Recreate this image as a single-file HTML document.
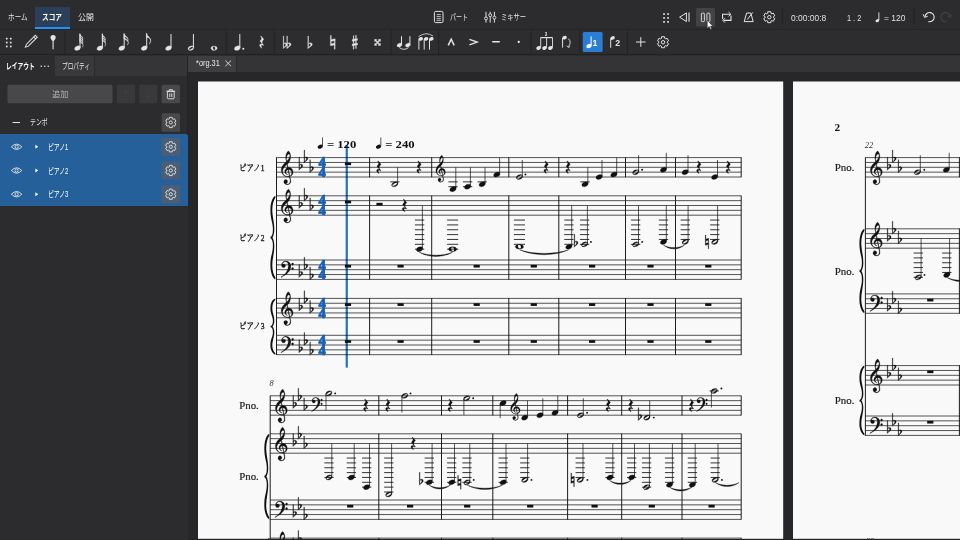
<!DOCTYPE html>
<html lang="ja"><head><meta charset="utf-8"><title>org.31</title>
<style>
html,body{margin:0;padding:0;background:#2d2d30;}
body{width:960px;height:540px;overflow:hidden;position:relative;font-family:"Liberation Sans","Noto Sans CJK JP",sans-serif;color:#e6e6e6;font-size:8px;}
.a{position:absolute;white-space:nowrap;line-height:1;}
.t{position:absolute;white-space:nowrap;line-height:10px;height:10px;transform-origin:0 50%;}
#score{position:absolute;left:0;top:0;}
#score .g{stroke:#111;stroke-width:14px;}
#score text{font-family:"Liberation Serif","Noto Serif CJK JP","Noto Serif CJK SC",serif;}
#ui{position:absolute;left:0;top:0;pointer-events:none;}
#ui text{font-family:"Liberation Sans",sans-serif;}
</style></head><body>
<div class="a" style="left:0;top:0;width:960px;height:29px;background:#2c2c2f"></div>
<div class="a" style="left:0;top:29px;width:960px;height:1px;background:#252527"></div>
<div class="a" style="left:0;top:30px;width:960px;height:24.5px;background:#2d2d30"></div>
<div class="a" style="left:0;top:54.4px;width:960px;height:1.1px;background:#222224"></div>
<div class="a" style="left:35px;top:6.6px;width:35.2px;height:20px;background:#2b4058"></div>
<div class="a" style="left:35px;top:26.5px;width:35.2px;height:2px;background:#2391f5"></div>
<!-- left panel -->
<div class="a" style="left:0;top:55.5px;width:187.6px;height:485px;background:#2c2c2f"></div>
<div class="a" style="left:55.2px;top:55.5px;width:131.8px;height:20.6px;background:#353538"></div>
<div class="a" style="left:55.2px;top:55.5px;width:40.2px;height:20.6px;background:#39393c;border-right:1px solid #2a2a2c;box-sizing:border-box"></div>
<div class="a" style="left:0;top:134.4px;width:187.8px;height:71.5px;background:#25609a"></div>
<div class="a" style="left:187.2px;top:55.5px;width:.9px;height:79px;background:#222224"></div>
<!-- canvas -->
<div class="a" style="left:188px;top:55.5px;width:772px;height:16px;background:#343437"></div>
<div class="a" style="left:188px;top:55.5px;width:49.4px;height:16px;background:#3e3e41;border-right:1px solid #2a2a2c;box-sizing:border-box"></div>
<div class="a" style="left:188px;top:71.5px;width:772px;height:469px;background:#27272a"></div>
<svg id="score" width="960" height="540" viewBox="0 0 960 540" fill="#111">
<rect x="198" y="81.5" width="585.2" height="460" fill="#f9f9f9"/>
<rect x="793" y="81.5" width="170" height="460" fill="#f9f9f9"/>

<path d="M276.5 157.6H741.2M276.5 162.45H741.2M276.5 167.3H741.2M276.5 172.15H741.2M276.5 177H741.2" stroke="#2a2a2a" stroke-width=".8" fill="none"/>
<path d="M276.5 195.8H741.2M276.5 200.65H741.2M276.5 205.5H741.2M276.5 210.35H741.2M276.5 215.2H741.2" stroke="#2a2a2a" stroke-width=".8" fill="none"/>
<path d="M276.5 260H741.2M276.5 264.85H741.2M276.5 269.7H741.2M276.5 274.55H741.2M276.5 279.4H741.2" stroke="#2a2a2a" stroke-width=".8" fill="none"/>
<path d="M276.5 298.4H741.2M276.5 303.25H741.2M276.5 308.1H741.2M276.5 312.95H741.2M276.5 317.8H741.2" stroke="#2a2a2a" stroke-width=".8" fill="none"/>
<path d="M276.5 335.3H741.2M276.5 340.15H741.2M276.5 345H741.2M276.5 349.85H741.2M276.5 354.7H741.2" stroke="#2a2a2a" stroke-width=".8" fill="none"/>
<path d="M276.5 157.35V354.95" stroke="#111" stroke-width="0.95" fill="none"/>
<path d="M369.6 157.35V177.25" stroke="#111" stroke-width="0.95" fill="none"/>
<path d="M369.6 195.55V279.65" stroke="#111" stroke-width="0.95" fill="none"/>
<path d="M369.6 298.15V354.95" stroke="#111" stroke-width="0.95" fill="none"/>
<path d="M431.7 157.35V177.25" stroke="#111" stroke-width="0.95" fill="none"/>
<path d="M431.7 195.55V279.65" stroke="#111" stroke-width="0.95" fill="none"/>
<path d="M431.7 298.15V354.95" stroke="#111" stroke-width="0.95" fill="none"/>
<path d="M508.8 157.35V177.25" stroke="#111" stroke-width="0.95" fill="none"/>
<path d="M508.8 195.55V279.65" stroke="#111" stroke-width="0.95" fill="none"/>
<path d="M508.8 298.15V354.95" stroke="#111" stroke-width="0.95" fill="none"/>
<path d="M558.8 157.35V177.25" stroke="#111" stroke-width="0.95" fill="none"/>
<path d="M558.8 195.55V279.65" stroke="#111" stroke-width="0.95" fill="none"/>
<path d="M558.8 298.15V354.95" stroke="#111" stroke-width="0.95" fill="none"/>
<path d="M625.5 157.35V177.25" stroke="#111" stroke-width="0.95" fill="none"/>
<path d="M625.5 195.55V279.65" stroke="#111" stroke-width="0.95" fill="none"/>
<path d="M625.5 298.15V354.95" stroke="#111" stroke-width="0.95" fill="none"/>
<path d="M675.5 157.35V177.25" stroke="#111" stroke-width="0.95" fill="none"/>
<path d="M675.5 195.55V279.65" stroke="#111" stroke-width="0.95" fill="none"/>
<path d="M675.5 298.15V354.95" stroke="#111" stroke-width="0.95" fill="none"/>
<path d="M741.2 157.35V177.25" stroke="#111" stroke-width="0.95" fill="none"/>
<path d="M741.2 195.55V279.65" stroke="#111" stroke-width="0.95" fill="none"/>
<path d="M741.2 298.15V354.95" stroke="#111" stroke-width="0.95" fill="none"/>
<path transform="matrix(0.03106 0 0 -0.08360 268.85 279.4)" d="M53 509Q84 511 107 533Q130 555 130 595Q130 615 125 634Q120 653 108 671Q85 706 68 743Q50 780 50 835Q50 879 72 913Q93 947 129 970Q165 992 207 1000L211 976Q167 954 139 917Q111 880 111 833Q111 807 120 778Q128 750 144 718Q176 654 176 602Q176 577 168 558Q163 545 152 532Q141 518 131 509Q121 500 117 500Q138 490 157 462Q176 433 176 398Q176 345 144 283Q111 220 111 167Q111 120 139 84Q167 47 211 24L207 0Q165 8 129 30Q93 53 72 88Q50 122 50 165Q50 210 60 240Q71 271 90 298Q105 320 118 347Q130 374 130 405Q130 445 108 466Q85 487 53 491Z"/>
<path transform="matrix(0.03106 0 0 -0.05630 268.85 354.7)" d="M53 509Q84 511 107 533Q130 555 130 595Q130 615 125 634Q120 653 108 671Q85 706 68 743Q50 780 50 835Q50 879 72 913Q93 947 129 970Q165 992 207 1000L211 976Q167 954 139 917Q111 880 111 833Q111 807 120 778Q128 750 144 718Q176 654 176 602Q176 577 168 558Q163 545 152 532Q141 518 131 509Q121 500 117 500Q138 490 157 462Q176 433 176 398Q176 345 144 283Q111 220 111 167Q111 120 139 84Q167 47 211 24L207 0Q165 8 129 30Q93 53 72 88Q50 122 50 165Q50 210 60 240Q71 271 90 298Q105 320 118 347Q130 374 130 405Q130 445 108 466Q85 487 53 491Z"/>
<path transform="matrix(0.01940 0 0 -0.01940 280.23 177)" d="M314 801Q300 854 291 906Q282 958 282 1012Q282 1059 288 1100Q295 1142 307 1177Q320 1217 341 1252Q362 1288 386 1311Q409 1334 427 1334Q451 1334 493 1249Q514 1206 524 1156Q534 1106 534 1049Q534 978 515 908Q496 837 460 775Q423 713 372 666L407 498Q422 500 432 501Q442 502 447 502Q508 502 556 468Q604 433 632 377Q661 321 661 254Q661 177 622 116Q582 54 503 25Q508 8 532 -117Q538 -147 541 -164Q544 -182 545 -195Q546 -208 546 -225Q546 -275 522 -314Q497 -354 456 -376Q414 -398 363 -398Q311 -398 271 -378Q231 -359 208 -324Q185 -290 185 -245Q185 -197 212 -165Q238 -133 287 -133Q329 -133 356 -164Q382 -194 382 -236Q382 -272 357 -299Q332 -326 292 -326H282Q308 -365 364 -365Q433 -365 472 -320Q511 -275 511 -205Q511 -188 507 -160Q503 -131 493 -91Q483 -51 478 -25Q472 1 470 12Q436 2 390 2Q304 2 222 52Q142 102 96 184Q50 266 50 361Q50 451 91 530Q132 609 192 675Q253 741 314 801ZM341 826Q364 838 390 870Q416 903 440 945Q464 987 479 1030Q494 1072 494 1106Q494 1142 483 1163Q472 1184 445 1184Q421 1184 398 1162Q376 1140 358 1104Q341 1067 331 1022Q321 977 321 930Q321 898 328 872Q334 846 341 826ZM398 379Q371 373 347 354Q323 334 308 306Q294 279 294 248Q294 223 307 196Q320 170 339 154Q352 142 365 136Q380 129 380 123Q380 120 370 117Q332 126 302 151Q271 176 254 212Q236 247 236 287Q236 330 254 370Q271 410 302 442Q334 474 374 490L345 641Q229 547 174 456Q120 366 120 277Q120 212 154 156Q188 100 247 66Q306 31 380 31Q400 31 420 35Q441 39 464 45ZM495 55Q593 97 593 227Q593 270 571 306Q549 341 512 362Q475 383 429 383Z" class="g"/>
<path transform="matrix(0.01940 0 0 -0.01940 297.93 169.24)" d="M50 615H81V225Q118 262 165 262Q197 262 223 240Q249 219 249 178Q249 146 230 119Q211 92 179 65L110 6Q91 -10 76 -26Q61 -41 50 -55ZM81 12Q107 40 125 64Q143 87 153 105Q164 124 170 140Q175 156 175 170Q175 198 162 210Q149 223 134 223Q118 223 102 212Q87 200 81 180Z" class="g"/>
<path transform="matrix(0.01940 0 0 -0.01940 303.03 161.97)" d="M50 615H81V225Q118 262 165 262Q197 262 223 240Q249 219 249 178Q249 146 230 119Q211 92 179 65L110 6Q91 -10 76 -26Q61 -41 50 -55ZM81 12Q107 40 125 64Q143 87 153 105Q164 124 170 140Q175 156 175 170Q175 198 162 210Q149 223 134 223Q118 223 102 212Q87 200 81 180Z" class="g"/>
<path transform="matrix(0.01940 0 0 -0.01940 308.83 171.66)" d="M50 615H81V225Q118 262 165 262Q197 262 223 240Q249 219 249 178Q249 146 230 119Q211 92 179 65L110 6Q91 -10 76 -26Q61 -41 50 -55ZM81 12Q107 40 125 64Q143 87 153 105Q164 124 170 140Q175 156 175 170Q175 198 162 210Q149 223 134 223Q118 223 102 212Q87 200 81 180Z" class="g"/>
<text x="318.5" y="167.2" font-size="14.6" font-weight="700" fill="#155fbb" stroke="#155fbb" stroke-width=".7" textLength="7.4" lengthAdjust="spacingAndGlyphs">4</text>
<text x="318.5" y="176.9" font-size="14.6" font-weight="700" fill="#155fbb" stroke="#155fbb" stroke-width=".7" textLength="7.4" lengthAdjust="spacingAndGlyphs">4</text>
<rect x="344.9" y="162.45" width="6.2" height="2.7"/>
<path transform="matrix(0.01940 0 0 -0.01940 280.23 215.2)" d="M314 801Q300 854 291 906Q282 958 282 1012Q282 1059 288 1100Q295 1142 307 1177Q320 1217 341 1252Q362 1288 386 1311Q409 1334 427 1334Q451 1334 493 1249Q514 1206 524 1156Q534 1106 534 1049Q534 978 515 908Q496 837 460 775Q423 713 372 666L407 498Q422 500 432 501Q442 502 447 502Q508 502 556 468Q604 433 632 377Q661 321 661 254Q661 177 622 116Q582 54 503 25Q508 8 532 -117Q538 -147 541 -164Q544 -182 545 -195Q546 -208 546 -225Q546 -275 522 -314Q497 -354 456 -376Q414 -398 363 -398Q311 -398 271 -378Q231 -359 208 -324Q185 -290 185 -245Q185 -197 212 -165Q238 -133 287 -133Q329 -133 356 -164Q382 -194 382 -236Q382 -272 357 -299Q332 -326 292 -326H282Q308 -365 364 -365Q433 -365 472 -320Q511 -275 511 -205Q511 -188 507 -160Q503 -131 493 -91Q483 -51 478 -25Q472 1 470 12Q436 2 390 2Q304 2 222 52Q142 102 96 184Q50 266 50 361Q50 451 91 530Q132 609 192 675Q253 741 314 801ZM341 826Q364 838 390 870Q416 903 440 945Q464 987 479 1030Q494 1072 494 1106Q494 1142 483 1163Q472 1184 445 1184Q421 1184 398 1162Q376 1140 358 1104Q341 1067 331 1022Q321 977 321 930Q321 898 328 872Q334 846 341 826ZM398 379Q371 373 347 354Q323 334 308 306Q294 279 294 248Q294 223 307 196Q320 170 339 154Q352 142 365 136Q380 129 380 123Q380 120 370 117Q332 126 302 151Q271 176 254 212Q236 247 236 287Q236 330 254 370Q271 410 302 442Q334 474 374 490L345 641Q229 547 174 456Q120 366 120 277Q120 212 154 156Q188 100 247 66Q306 31 380 31Q400 31 420 35Q441 39 464 45ZM495 55Q593 97 593 227Q593 270 571 306Q549 341 512 362Q475 383 429 383Z" class="g"/>
<path transform="matrix(0.01940 0 0 -0.01940 297.93 207.44)" d="M50 615H81V225Q118 262 165 262Q197 262 223 240Q249 219 249 178Q249 146 230 119Q211 92 179 65L110 6Q91 -10 76 -26Q61 -41 50 -55ZM81 12Q107 40 125 64Q143 87 153 105Q164 124 170 140Q175 156 175 170Q175 198 162 210Q149 223 134 223Q118 223 102 212Q87 200 81 180Z" class="g"/>
<path transform="matrix(0.01940 0 0 -0.01940 303.03 200.17)" d="M50 615H81V225Q118 262 165 262Q197 262 223 240Q249 219 249 178Q249 146 230 119Q211 92 179 65L110 6Q91 -10 76 -26Q61 -41 50 -55ZM81 12Q107 40 125 64Q143 87 153 105Q164 124 170 140Q175 156 175 170Q175 198 162 210Q149 223 134 223Q118 223 102 212Q87 200 81 180Z" class="g"/>
<path transform="matrix(0.01940 0 0 -0.01940 308.83 209.87)" d="M50 615H81V225Q118 262 165 262Q197 262 223 240Q249 219 249 178Q249 146 230 119Q211 92 179 65L110 6Q91 -10 76 -26Q61 -41 50 -55ZM81 12Q107 40 125 64Q143 87 153 105Q164 124 170 140Q175 156 175 170Q175 198 162 210Q149 223 134 223Q118 223 102 212Q87 200 81 180Z" class="g"/>
<text x="318.5" y="205.4" font-size="14.6" font-weight="700" fill="#155fbb" stroke="#155fbb" stroke-width=".7" textLength="7.4" lengthAdjust="spacingAndGlyphs">4</text>
<text x="318.5" y="215.1" font-size="14.6" font-weight="700" fill="#155fbb" stroke="#155fbb" stroke-width=".7" textLength="7.4" lengthAdjust="spacingAndGlyphs">4</text>
<rect x="344.9" y="200.65" width="6.2" height="2.7"/>
<path transform="matrix(0.01824 0 0 -0.02056 280.09 279.57)" d="M50 123Q216 231 288 301Q336 348 373 408Q410 469 432 536Q453 603 453 669Q453 728 435 774Q417 819 383 845Q349 871 302 871Q284 871 264 867Q245 863 224 855Q181 839 158 814Q135 788 135 765Q135 756 143 752Q151 748 158 748Q168 748 183 752Q190 754 196 755Q203 756 210 756Q248 756 272 734Q296 711 296 674Q296 638 266 612Q236 586 195 586Q146 586 111 617Q76 648 76 697Q76 756 109 802Q142 848 198 874Q255 900 324 900Q400 900 460 867Q520 834 556 776Q591 719 591 646Q591 551 538 464Q511 419 476 379Q442 339 389 298Q336 256 256 208Q176 160 57 101ZM687 809Q710 809 726 793Q742 777 742 754Q742 731 726 716Q710 700 687 700Q664 700 648 716Q632 731 632 754Q632 777 648 793Q664 809 687 809ZM687 589Q710 589 726 573Q742 557 742 534Q742 511 726 496Q710 480 687 480Q664 480 648 496Q632 511 632 534Q632 557 648 573Q664 589 687 589Z" class="g"/>
<path transform="matrix(0.01940 0 0 -0.01940 297.93 276.49)" d="M50 615H81V225Q118 262 165 262Q197 262 223 240Q249 219 249 178Q249 146 230 119Q211 92 179 65L110 6Q91 -10 76 -26Q61 -41 50 -55ZM81 12Q107 40 125 64Q143 87 153 105Q164 124 170 140Q175 156 175 170Q175 198 162 210Q149 223 134 223Q118 223 102 212Q87 200 81 180Z" class="g"/>
<path transform="matrix(0.01940 0 0 -0.01940 303.03 269.21)" d="M50 615H81V225Q118 262 165 262Q197 262 223 240Q249 219 249 178Q249 146 230 119Q211 92 179 65L110 6Q91 -10 76 -26Q61 -41 50 -55ZM81 12Q107 40 125 64Q143 87 153 105Q164 124 170 140Q175 156 175 170Q175 198 162 210Q149 223 134 223Q118 223 102 212Q87 200 81 180Z" class="g"/>
<path transform="matrix(0.01940 0 0 -0.01940 308.83 278.92)" d="M50 615H81V225Q118 262 165 262Q197 262 223 240Q249 219 249 178Q249 146 230 119Q211 92 179 65L110 6Q91 -10 76 -26Q61 -41 50 -55ZM81 12Q107 40 125 64Q143 87 153 105Q164 124 170 140Q175 156 175 170Q175 198 162 210Q149 223 134 223Q118 223 102 212Q87 200 81 180Z" class="g"/>
<text x="318.5" y="269.6" font-size="14.6" font-weight="700" fill="#155fbb" stroke="#155fbb" stroke-width=".7" textLength="7.4" lengthAdjust="spacingAndGlyphs">4</text>
<text x="318.5" y="279.3" font-size="14.6" font-weight="700" fill="#155fbb" stroke="#155fbb" stroke-width=".7" textLength="7.4" lengthAdjust="spacingAndGlyphs">4</text>
<rect x="344.9" y="264.85" width="6.2" height="2.7"/>
<path transform="matrix(0.01940 0 0 -0.01940 280.23 317.8)" d="M314 801Q300 854 291 906Q282 958 282 1012Q282 1059 288 1100Q295 1142 307 1177Q320 1217 341 1252Q362 1288 386 1311Q409 1334 427 1334Q451 1334 493 1249Q514 1206 524 1156Q534 1106 534 1049Q534 978 515 908Q496 837 460 775Q423 713 372 666L407 498Q422 500 432 501Q442 502 447 502Q508 502 556 468Q604 433 632 377Q661 321 661 254Q661 177 622 116Q582 54 503 25Q508 8 532 -117Q538 -147 541 -164Q544 -182 545 -195Q546 -208 546 -225Q546 -275 522 -314Q497 -354 456 -376Q414 -398 363 -398Q311 -398 271 -378Q231 -359 208 -324Q185 -290 185 -245Q185 -197 212 -165Q238 -133 287 -133Q329 -133 356 -164Q382 -194 382 -236Q382 -272 357 -299Q332 -326 292 -326H282Q308 -365 364 -365Q433 -365 472 -320Q511 -275 511 -205Q511 -188 507 -160Q503 -131 493 -91Q483 -51 478 -25Q472 1 470 12Q436 2 390 2Q304 2 222 52Q142 102 96 184Q50 266 50 361Q50 451 91 530Q132 609 192 675Q253 741 314 801ZM341 826Q364 838 390 870Q416 903 440 945Q464 987 479 1030Q494 1072 494 1106Q494 1142 483 1163Q472 1184 445 1184Q421 1184 398 1162Q376 1140 358 1104Q341 1067 331 1022Q321 977 321 930Q321 898 328 872Q334 846 341 826ZM398 379Q371 373 347 354Q323 334 308 306Q294 279 294 248Q294 223 307 196Q320 170 339 154Q352 142 365 136Q380 129 380 123Q380 120 370 117Q332 126 302 151Q271 176 254 212Q236 247 236 287Q236 330 254 370Q271 410 302 442Q334 474 374 490L345 641Q229 547 174 456Q120 366 120 277Q120 212 154 156Q188 100 247 66Q306 31 380 31Q400 31 420 35Q441 39 464 45ZM495 55Q593 97 593 227Q593 270 571 306Q549 341 512 362Q475 383 429 383Z" class="g"/>
<path transform="matrix(0.01940 0 0 -0.01940 297.93 310.04)" d="M50 615H81V225Q118 262 165 262Q197 262 223 240Q249 219 249 178Q249 146 230 119Q211 92 179 65L110 6Q91 -10 76 -26Q61 -41 50 -55ZM81 12Q107 40 125 64Q143 87 153 105Q164 124 170 140Q175 156 175 170Q175 198 162 210Q149 223 134 223Q118 223 102 212Q87 200 81 180Z" class="g"/>
<path transform="matrix(0.01940 0 0 -0.01940 303.03 302.76)" d="M50 615H81V225Q118 262 165 262Q197 262 223 240Q249 219 249 178Q249 146 230 119Q211 92 179 65L110 6Q91 -10 76 -26Q61 -41 50 -55ZM81 12Q107 40 125 64Q143 87 153 105Q164 124 170 140Q175 156 175 170Q175 198 162 210Q149 223 134 223Q118 223 102 212Q87 200 81 180Z" class="g"/>
<path transform="matrix(0.01940 0 0 -0.01940 308.83 312.46)" d="M50 615H81V225Q118 262 165 262Q197 262 223 240Q249 219 249 178Q249 146 230 119Q211 92 179 65L110 6Q91 -10 76 -26Q61 -41 50 -55ZM81 12Q107 40 125 64Q143 87 153 105Q164 124 170 140Q175 156 175 170Q175 198 162 210Q149 223 134 223Q118 223 102 212Q87 200 81 180Z" class="g"/>
<text x="318.5" y="308" font-size="14.6" font-weight="700" fill="#155fbb" stroke="#155fbb" stroke-width=".7" textLength="7.4" lengthAdjust="spacingAndGlyphs">4</text>
<text x="318.5" y="317.7" font-size="14.6" font-weight="700" fill="#155fbb" stroke="#155fbb" stroke-width=".7" textLength="7.4" lengthAdjust="spacingAndGlyphs">4</text>
<rect x="344.9" y="303.25" width="6.2" height="2.7"/>
<path transform="matrix(0.01824 0 0 -0.02056 280.09 354.87)" d="M50 123Q216 231 288 301Q336 348 373 408Q410 469 432 536Q453 603 453 669Q453 728 435 774Q417 819 383 845Q349 871 302 871Q284 871 264 867Q245 863 224 855Q181 839 158 814Q135 788 135 765Q135 756 143 752Q151 748 158 748Q168 748 183 752Q190 754 196 755Q203 756 210 756Q248 756 272 734Q296 711 296 674Q296 638 266 612Q236 586 195 586Q146 586 111 617Q76 648 76 697Q76 756 109 802Q142 848 198 874Q255 900 324 900Q400 900 460 867Q520 834 556 776Q591 719 591 646Q591 551 538 464Q511 419 476 379Q442 339 389 298Q336 256 256 208Q176 160 57 101ZM687 809Q710 809 726 793Q742 777 742 754Q742 731 726 716Q710 700 687 700Q664 700 648 716Q632 731 632 754Q632 777 648 793Q664 809 687 809ZM687 589Q710 589 726 573Q742 557 742 534Q742 511 726 496Q710 480 687 480Q664 480 648 496Q632 511 632 534Q632 557 648 573Q664 589 687 589Z" class="g"/>
<path transform="matrix(0.01940 0 0 -0.01940 297.93 351.79)" d="M50 615H81V225Q118 262 165 262Q197 262 223 240Q249 219 249 178Q249 146 230 119Q211 92 179 65L110 6Q91 -10 76 -26Q61 -41 50 -55ZM81 12Q107 40 125 64Q143 87 153 105Q164 124 170 140Q175 156 175 170Q175 198 162 210Q149 223 134 223Q118 223 102 212Q87 200 81 180Z" class="g"/>
<path transform="matrix(0.01940 0 0 -0.01940 303.03 344.51)" d="M50 615H81V225Q118 262 165 262Q197 262 223 240Q249 219 249 178Q249 146 230 119Q211 92 179 65L110 6Q91 -10 76 -26Q61 -41 50 -55ZM81 12Q107 40 125 64Q143 87 153 105Q164 124 170 140Q175 156 175 170Q175 198 162 210Q149 223 134 223Q118 223 102 212Q87 200 81 180Z" class="g"/>
<path transform="matrix(0.01940 0 0 -0.01940 308.83 354.22)" d="M50 615H81V225Q118 262 165 262Q197 262 223 240Q249 219 249 178Q249 146 230 119Q211 92 179 65L110 6Q91 -10 76 -26Q61 -41 50 -55ZM81 12Q107 40 125 64Q143 87 153 105Q164 124 170 140Q175 156 175 170Q175 198 162 210Q149 223 134 223Q118 223 102 212Q87 200 81 180Z" class="g"/>
<text x="318.5" y="344.9" font-size="14.6" font-weight="700" fill="#155fbb" stroke="#155fbb" stroke-width=".7" textLength="7.4" lengthAdjust="spacingAndGlyphs">4</text>
<text x="318.5" y="354.6" font-size="14.6" font-weight="700" fill="#155fbb" stroke="#155fbb" stroke-width=".7" textLength="7.4" lengthAdjust="spacingAndGlyphs">4</text>
<rect x="344.9" y="340.15" width="6.2" height="2.7"/>
<rect x="397.5" y="264.85" width="6.2" height="2.7"/>
<rect x="473.6" y="264.85" width="6.2" height="2.7"/>
<rect x="530.7" y="264.85" width="6.2" height="2.7"/>
<rect x="589" y="264.85" width="6.2" height="2.7"/>
<rect x="647.4" y="264.85" width="6.2" height="2.7"/>
<rect x="705.2" y="264.85" width="6.2" height="2.7"/>
<rect x="397.5" y="303.25" width="6.2" height="2.7"/>
<rect x="473.6" y="303.25" width="6.2" height="2.7"/>
<rect x="530.7" y="303.25" width="6.2" height="2.7"/>
<rect x="589" y="303.25" width="6.2" height="2.7"/>
<rect x="647.4" y="303.25" width="6.2" height="2.7"/>
<rect x="705.2" y="303.25" width="6.2" height="2.7"/>
<rect x="397.5" y="340.15" width="6.2" height="2.7"/>
<rect x="473.6" y="340.15" width="6.2" height="2.7"/>
<rect x="530.7" y="340.15" width="6.2" height="2.7"/>
<rect x="589" y="340.15" width="6.2" height="2.7"/>
<rect x="647.4" y="340.15" width="6.2" height="2.7"/>
<rect x="705.2" y="340.15" width="6.2" height="2.7"/>
<text x="238.9" y="170.9" font-size="8.6" fill="#1c1c1c" textLength="25.6" lengthAdjust="spacingAndGlyphs" stroke="#1c1c1c" stroke-width=".35">ピアノ1</text>
<text x="238.9" y="240.6" font-size="8.6" fill="#1c1c1c" textLength="25.6" lengthAdjust="spacingAndGlyphs" stroke="#1c1c1c" stroke-width=".35">ピアノ2</text>
<text x="238.9" y="329.3" font-size="8.6" fill="#1c1c1c" textLength="25.6" lengthAdjust="spacingAndGlyphs" stroke="#1c1c1c" stroke-width=".35">ピアノ3</text>
<ellipse cx="320.2" cy="146.7" rx="2.7" ry="1.9" transform="rotate(-22 320.2 146.7)"/>
<path d="M322.5 146.2V137.4" stroke="#111" stroke-width=".7"/>
<text x="326.9" y="147.6" font-size="11.4" fill="#111" font-weight="700" textLength="29.4" lengthAdjust="spacingAndGlyphs">= 120</text>
<ellipse cx="378.5" cy="146.7" rx="2.7" ry="1.9" transform="rotate(-22 378.5 146.7)"/>
<path d="M380.8 146.2V137.4" stroke="#111" stroke-width=".7"/>
<text x="385.2" y="147.6" font-size="11.4" fill="#111" font-weight="700" textLength="29.4" lengthAdjust="spacingAndGlyphs">= 240</text>
<path transform="matrix(0.01746 0 0 -0.01668 375.71 175.64)" d="M147 878 307 683Q257 624 230 581Q203 538 203 494Q203 457 227 416Q251 376 303 314L287 292Q243 320 205 320Q177 320 163 302Q149 283 149 257Q149 225 162 196Q176 168 199 142L186 123Q117 173 84 214Q51 255 51 303Q51 346 78 366Q105 386 143 386Q173 386 221 363V365L67 570Q168 659 168 736Q168 797 104 878Z" class="g"/>
<path d="M390.15 181.85H399.45" stroke="#111" stroke-width=".85" fill="none"/>
<path transform="matrix(0.02121 0 0 -0.01862 390.59 186.77)" d="M159 -1Q111 -1 80 22Q50 44 50 90Q50 141 78 182Q107 222 153 246Q199 269 251 269Q295 269 321 246Q347 222 347 179Q347 130 321 89Q295 48 252 24Q210 -1 159 -1ZM77 66Q77 56 84 48Q92 40 105 40Q140 40 192 69Q227 89 256 114Q284 138 301 162Q318 187 318 204Q318 215 312 222Q307 230 293 230Q274 230 247 218Q220 206 190 187Q161 168 135 146Q109 123 93 102Q77 81 77 66Z" class="g"/>
<path d="M397.6 183.47V167.3" stroke="#111" stroke-width=".7" fill="none"/>
<path transform="matrix(0.01746 0 0 -0.01668 415.91 175.64)" d="M147 878 307 683Q257 624 230 581Q203 538 203 494Q203 457 227 416Q251 376 303 314L287 292Q243 320 205 320Q177 320 163 302Q149 283 149 257Q149 225 162 196Q176 168 199 142L186 123Q117 173 84 214Q51 255 51 303Q51 346 78 366Q105 386 143 386Q173 386 221 363V365L67 570Q168 659 168 736Q168 797 104 878Z" class="g"/>
<path transform="matrix(0.01552 0 0 -0.01552 435.12 176.03)" d="M314 801Q300 854 291 906Q282 958 282 1012Q282 1059 288 1100Q295 1142 307 1177Q320 1217 341 1252Q362 1288 386 1311Q409 1334 427 1334Q451 1334 493 1249Q514 1206 524 1156Q534 1106 534 1049Q534 978 515 908Q496 837 460 775Q423 713 372 666L407 498Q422 500 432 501Q442 502 447 502Q508 502 556 468Q604 433 632 377Q661 321 661 254Q661 177 622 116Q582 54 503 25Q508 8 532 -117Q538 -147 541 -164Q544 -182 545 -195Q546 -208 546 -225Q546 -275 522 -314Q497 -354 456 -376Q414 -398 363 -398Q311 -398 271 -378Q231 -359 208 -324Q185 -290 185 -245Q185 -197 212 -165Q238 -133 287 -133Q329 -133 356 -164Q382 -194 382 -236Q382 -272 357 -299Q332 -326 292 -326H282Q308 -365 364 -365Q433 -365 472 -320Q511 -275 511 -205Q511 -188 507 -160Q503 -131 493 -91Q483 -51 478 -25Q472 1 470 12Q436 2 390 2Q304 2 222 52Q142 102 96 184Q50 266 50 361Q50 451 91 530Q132 609 192 675Q253 741 314 801ZM341 826Q364 838 390 870Q416 903 440 945Q464 987 479 1030Q494 1072 494 1106Q494 1142 483 1163Q472 1184 445 1184Q421 1184 398 1162Q376 1140 358 1104Q341 1067 331 1022Q321 977 321 930Q321 898 328 872Q334 846 341 826ZM398 379Q371 373 347 354Q323 334 308 306Q294 279 294 248Q294 223 307 196Q320 170 339 154Q352 142 365 136Q380 129 380 123Q380 120 370 117Q332 126 302 151Q271 176 254 212Q236 247 236 287Q236 330 254 370Q271 410 302 442Q334 474 374 490L345 641Q229 547 174 456Q120 366 120 277Q120 212 154 156Q188 100 247 66Q306 31 380 31Q400 31 420 35Q441 39 464 45ZM495 55Q593 97 593 227Q593 270 571 306Q549 341 512 362Q475 383 429 383Z" class="g"/>
<path d="M448.35 181.85H457.65M448.35 186.7H457.65" stroke="#111" stroke-width=".85" fill="none"/>
<path transform="matrix(0.02121 0 0 -0.01862 448.79 191.62)" d="M159 -1Q111 -1 80 22Q50 44 50 90Q50 141 78 182Q107 222 153 246Q199 269 251 269Q295 269 321 246Q347 222 347 179Q347 130 321 89Q295 48 252 24Q210 -1 159 -1Z" class="g"/>
<path d="M455.8 188.32V167.3" stroke="#111" stroke-width=".7" fill="none"/>
<path d="M462.95 181.85H472.25M462.95 186.7H472.25" stroke="#111" stroke-width=".85" fill="none"/>
<path transform="matrix(0.02121 0 0 -0.01862 463.39 189.2)" d="M159 -1Q111 -1 80 22Q50 44 50 90Q50 141 78 182Q107 222 153 246Q199 269 251 269Q295 269 321 246Q347 222 347 179Q347 130 321 89Q295 48 252 24Q210 -1 159 -1Z" class="g"/>
<path d="M470.4 185.9V167.3" stroke="#111" stroke-width=".7" fill="none"/>
<path d="M477.55 181.85H486.85" stroke="#111" stroke-width=".85" fill="none"/>
<path transform="matrix(0.02121 0 0 -0.01862 477.99 186.77)" d="M159 -1Q111 -1 80 22Q50 44 50 90Q50 141 78 182Q107 222 153 246Q199 269 251 269Q295 269 321 246Q347 222 347 179Q347 130 321 89Q295 48 252 24Q210 -1 159 -1Z" class="g"/>
<path d="M485 183.47V167.3" stroke="#111" stroke-width=".7" fill="none"/>
<path transform="matrix(0.02121 0 0 -0.01862 492.59 177.07)" d="M159 -1Q111 -1 80 22Q50 44 50 90Q50 141 78 182Q107 222 153 246Q199 269 251 269Q295 269 321 246Q347 222 347 179Q347 130 321 89Q295 48 252 24Q210 -1 159 -1Z" class="g"/>
<path d="M499.6 173.77V157.6" stroke="#111" stroke-width=".7" fill="none"/>
<path transform="matrix(0.02121 0 0 -0.01862 515.29 179.5)" d="M159 -1Q111 -1 80 22Q50 44 50 90Q50 141 78 182Q107 222 153 246Q199 269 251 269Q295 269 321 246Q347 222 347 179Q347 130 321 89Q295 48 252 24Q210 -1 159 -1ZM77 66Q77 56 84 48Q92 40 105 40Q140 40 192 69Q227 89 256 114Q284 138 301 162Q318 187 318 204Q318 215 312 222Q307 230 293 230Q274 230 247 218Q220 206 190 187Q161 168 135 146Q109 123 93 102Q77 81 77 66Z" class="g"/>
<path d="M522.3 176.2V160.03" stroke="#111" stroke-width=".7" fill="none"/>
<circle cx="525.4" cy="174.57" r=".95"/>
<path transform="matrix(0.01746 0 0 -0.01668 543.01 175.64)" d="M147 878 307 683Q257 624 230 581Q203 538 203 494Q203 457 227 416Q251 376 303 314L287 292Q243 320 205 320Q177 320 163 302Q149 283 149 257Q149 225 162 196Q176 168 199 142L186 123Q117 173 84 214Q51 255 51 303Q51 346 78 366Q105 386 143 386Q173 386 221 363V365L67 570Q168 659 168 736Q168 797 104 878Z" class="g"/>
<path transform="matrix(0.01746 0 0 -0.01668 564.91 175.64)" d="M147 878 307 683Q257 624 230 581Q203 538 203 494Q203 457 227 416Q251 376 303 314L287 292Q243 320 205 320Q177 320 163 302Q149 283 149 257Q149 225 162 196Q176 168 199 142L186 123Q117 173 84 214Q51 255 51 303Q51 346 78 366Q105 386 143 386Q173 386 221 363V365L67 570Q168 659 168 736Q168 797 104 878Z" class="g"/>
<path d="M580.35 181.85H589.65" stroke="#111" stroke-width=".85" fill="none"/>
<path transform="matrix(0.02121 0 0 -0.01862 580.79 186.77)" d="M159 -1Q111 -1 80 22Q50 44 50 90Q50 141 78 182Q107 222 153 246Q199 269 251 269Q295 269 321 246Q347 222 347 179Q347 130 321 89Q295 48 252 24Q210 -1 159 -1Z" class="g"/>
<path d="M587.8 183.47V167.3" stroke="#111" stroke-width=".7" fill="none"/>
<path transform="matrix(0.02121 0 0 -0.01862 594.99 179.5)" d="M159 -1Q111 -1 80 22Q50 44 50 90Q50 141 78 182Q107 222 153 246Q199 269 251 269Q295 269 321 246Q347 222 347 179Q347 130 321 89Q295 48 252 24Q210 -1 159 -1Z" class="g"/>
<path d="M602 176.2V160.03" stroke="#111" stroke-width=".7" fill="none"/>
<path transform="matrix(0.02121 0 0 -0.01862 609.69 177.07)" d="M159 -1Q111 -1 80 22Q50 44 50 90Q50 141 78 182Q107 222 153 246Q199 269 251 269Q295 269 321 246Q347 222 347 179Q347 130 321 89Q295 48 252 24Q210 -1 159 -1Z" class="g"/>
<path d="M616.7 173.77V157.6" stroke="#111" stroke-width=".7" fill="none"/>
<path transform="matrix(0.02121 0 0 -0.01862 631.59 174.65)" d="M159 -1Q111 -1 80 22Q50 44 50 90Q50 141 78 182Q107 222 153 246Q199 269 251 269Q295 269 321 246Q347 222 347 179Q347 130 321 89Q295 48 252 24Q210 -1 159 -1ZM77 66Q77 56 84 48Q92 40 105 40Q140 40 192 69Q227 89 256 114Q284 138 301 162Q318 187 318 204Q318 215 312 222Q307 230 293 230Q274 230 247 218Q220 206 190 187Q161 168 135 146Q109 123 93 102Q77 81 77 66Z" class="g"/>
<path d="M638.6 171.35V155.18" stroke="#111" stroke-width=".7" fill="none"/>
<circle cx="642.1" cy="169.72" r=".95"/>
<path transform="matrix(0.02121 0 0 -0.01862 659.29 172.22)" d="M159 -1Q111 -1 80 22Q50 44 50 90Q50 141 78 182Q107 222 153 246Q199 269 251 269Q295 269 321 246Q347 222 347 179Q347 130 321 89Q295 48 252 24Q210 -1 159 -1Z" class="g"/>
<path d="M666.3 168.92V152.75" stroke="#111" stroke-width=".7" fill="none"/>
<path transform="matrix(0.02121 0 0 -0.01862 680.99 174.65)" d="M159 -1Q111 -1 80 22Q50 44 50 90Q50 141 78 182Q107 222 153 246Q199 269 251 269Q295 269 321 246Q347 222 347 179Q347 130 321 89Q295 48 252 24Q210 -1 159 -1Z" class="g"/>
<path d="M688 171.35V155.18" stroke="#111" stroke-width=".7" fill="none"/>
<path transform="matrix(0.01746 0 0 -0.01668 695.71 175.64)" d="M147 878 307 683Q257 624 230 581Q203 538 203 494Q203 457 227 416Q251 376 303 314L287 292Q243 320 205 320Q177 320 163 302Q149 283 149 257Q149 225 162 196Q176 168 199 142L186 123Q117 173 84 214Q51 255 51 303Q51 346 78 366Q105 386 143 386Q173 386 221 363V365L67 570Q168 659 168 736Q168 797 104 878Z" class="g"/>
<path transform="matrix(0.02121 0 0 -0.01862 710.49 179.5)" d="M159 -1Q111 -1 80 22Q50 44 50 90Q50 141 78 182Q107 222 153 246Q199 269 251 269Q295 269 321 246Q347 222 347 179Q347 130 321 89Q295 48 252 24Q210 -1 159 -1Z" class="g"/>
<path d="M717.5 176.2V160.03" stroke="#111" stroke-width=".7" fill="none"/>
<path transform="matrix(0.01746 0 0 -0.01668 725.11 175.64)" d="M147 878 307 683Q257 624 230 581Q203 538 203 494Q203 457 227 416Q251 376 303 314L287 292Q243 320 205 320Q177 320 163 302Q149 283 149 257Q149 225 162 196Q176 168 199 142L186 123Q117 173 84 214Q51 255 51 303Q51 346 78 366Q105 386 143 386Q173 386 221 363V365L67 570Q168 659 168 736Q168 797 104 878Z" class="g"/>
<rect x="376.4" y="202.8" width="6.2" height="2.7"/>
<path transform="matrix(0.01746 0 0 -0.01668 401.41 213.84)" d="M147 878 307 683Q257 624 230 581Q203 538 203 494Q203 457 227 416Q251 376 303 314L287 292Q243 320 205 320Q177 320 163 302Q149 283 149 257Q149 225 162 196Q176 168 199 142L186 123Q117 173 84 214Q51 255 51 303Q51 346 78 366Q105 386 143 386Q173 386 221 363V365L67 570Q168 659 168 736Q168 797 104 878Z" class="g"/>
<path d="M414.95 220.05H424.25M414.95 224.9H424.25M414.95 229.75H424.25M414.95 234.6H424.25M414.95 239.45H424.25M414.95 244.3H424.25M414.95 249.15H424.25" stroke="#111" stroke-width=".85" fill="none"/>
<path transform="matrix(0.02121 0 0 -0.01862 415.39 251.65)" d="M159 -1Q111 -1 80 22Q50 44 50 90Q50 141 78 182Q107 222 153 246Q199 269 251 269Q295 269 321 246Q347 222 347 179Q347 130 321 89Q295 48 252 24Q210 -1 159 -1Z" class="g"/>
<path d="M422.4 248.35V205.5" stroke="#111" stroke-width=".7" fill="none"/>
<path d="M447.1 220.05H458.2M447.1 224.9H458.2M447.1 229.75H458.2M447.1 234.6H458.2M447.1 239.45H458.2M447.1 244.3H458.2M447.1 249.15H458.2" stroke="#111" stroke-width=".85" fill="none"/>
<path transform="matrix(0.01957 0 0 -0.01862 447.62 251.65)" d="M50 135Q50 172 77 200Q104 228 150 244Q197 260 253 260Q310 260 358 244Q406 229 435 201Q464 173 464 135Q464 96 436 68Q408 39 362 24Q315 8 259 8Q203 8 156 23Q108 38 79 66Q50 95 50 135ZM280 28Q314 28 326 53Q339 78 339 112Q339 147 324 176Q310 205 286 222Q262 240 232 240Q198 240 186 215Q175 190 175 156Q175 122 189 93Q203 64 226 46Q250 28 280 28Z" class="g"/>
<path d="M419.2 252.2C428.55 256.19 443.25 256.19 452.6 252.2C443.25 257.89 428.55 257.89 419.2 252.2Z" stroke="#111" stroke-width=".35"/>
<path d="M513.9 220.05H525M513.9 224.9H525M513.9 229.75H525M513.9 234.6H525M513.9 239.45H525M513.9 244.3H525" stroke="#111" stroke-width=".85" fill="none"/>
<path transform="matrix(0.01957 0 0 -0.01862 514.42 249.22)" d="M50 135Q50 172 77 200Q104 228 150 244Q197 260 253 260Q310 260 358 244Q406 229 435 201Q464 173 464 135Q464 96 436 68Q408 39 362 24Q315 8 259 8Q203 8 156 23Q108 38 79 66Q50 95 50 135ZM280 28Q314 28 326 53Q339 78 339 112Q339 147 324 176Q310 205 286 222Q262 240 232 240Q198 240 186 215Q175 190 175 156Q175 122 189 93Q203 64 226 46Q250 28 280 28Z" class="g"/>
<path d="M564.25 220.05H573.55M564.25 224.9H573.55M564.25 229.75H573.55M564.25 234.6H573.55M564.25 239.45H573.55M564.25 244.3H573.55" stroke="#111" stroke-width=".85" fill="none"/>
<path transform="matrix(0.02121 0 0 -0.01862 564.69 249.22)" d="M159 -1Q111 -1 80 22Q50 44 50 90Q50 141 78 182Q107 222 153 246Q199 269 251 269Q295 269 321 246Q347 222 347 179Q347 130 321 89Q295 48 252 24Q210 -1 159 -1Z" class="g"/>
<path d="M571.7 245.93V205.5" stroke="#111" stroke-width=".7" fill="none"/>
<path d="M519.6 249.8C533.32 254.59 554.88 254.59 568.6 249.8C554.88 256.29 533.32 256.29 519.6 249.8Z" stroke="#111" stroke-width=".35"/>
<path transform="matrix(0.01940 0 0 -0.01940 573.13 246.24)" d="M50 615H81V225Q118 262 165 262Q197 262 223 240Q249 219 249 178Q249 146 230 119Q211 92 179 65L110 6Q91 -10 76 -26Q61 -41 50 -55ZM81 12Q107 40 125 64Q143 87 153 105Q164 124 170 140Q175 156 175 170Q175 198 162 210Q149 223 134 223Q118 223 102 212Q87 200 81 180Z" class="g"/>
<path d="M579.95 220.05H589.25M579.95 224.9H589.25M579.95 229.75H589.25M579.95 234.6H589.25M579.95 239.45H589.25M579.95 244.3H589.25" stroke="#111" stroke-width=".85" fill="none"/>
<path transform="matrix(0.02121 0 0 -0.01862 580.39 246.8)" d="M159 -1Q111 -1 80 22Q50 44 50 90Q50 141 78 182Q107 222 153 246Q199 269 251 269Q295 269 321 246Q347 222 347 179Q347 130 321 89Q295 48 252 24Q210 -1 159 -1ZM77 66Q77 56 84 48Q92 40 105 40Q140 40 192 69Q227 89 256 114Q284 138 301 162Q318 187 318 204Q318 215 312 222Q307 230 293 230Q274 230 247 218Q220 206 190 187Q161 168 135 146Q109 123 93 102Q77 81 77 66Z" class="g"/>
<path d="M587.4 243.5V205.5" stroke="#111" stroke-width=".7" fill="none"/>
<circle cx="590.9" cy="241.88" r=".95"/>
<path d="M631.05 220.05H640.35M631.05 224.9H640.35M631.05 229.75H640.35M631.05 234.6H640.35M631.05 239.45H640.35M631.05 244.3H640.35" stroke="#111" stroke-width=".85" fill="none"/>
<path transform="matrix(0.02121 0 0 -0.01862 631.49 246.8)" d="M159 -1Q111 -1 80 22Q50 44 50 90Q50 141 78 182Q107 222 153 246Q199 269 251 269Q295 269 321 246Q347 222 347 179Q347 130 321 89Q295 48 252 24Q210 -1 159 -1ZM77 66Q77 56 84 48Q92 40 105 40Q140 40 192 69Q227 89 256 114Q284 138 301 162Q318 187 318 204Q318 215 312 222Q307 230 293 230Q274 230 247 218Q220 206 190 187Q161 168 135 146Q109 123 93 102Q77 81 77 66Z" class="g"/>
<path d="M638.5 243.5V205.5" stroke="#111" stroke-width=".7" fill="none"/>
<circle cx="642.2" cy="241.88" r=".95"/>
<path d="M658.85 220.05H668.15M658.85 224.9H668.15M658.85 229.75H668.15M658.85 234.6H668.15M658.85 239.45H668.15" stroke="#111" stroke-width=".85" fill="none"/>
<path transform="matrix(0.02121 0 0 -0.01862 659.29 244.37)" d="M159 -1Q111 -1 80 22Q50 44 50 90Q50 141 78 182Q107 222 153 246Q199 269 251 269Q295 269 321 246Q347 222 347 179Q347 130 321 89Q295 48 252 24Q210 -1 159 -1Z" class="g"/>
<path d="M666.3 241.07V205.5" stroke="#111" stroke-width=".7" fill="none"/>
<path d="M663.4 245C669.34 248.46 678.66 248.46 684.6 245C678.66 250.16 669.34 250.16 663.4 245Z" stroke="#111" stroke-width=".35"/>
<path d="M680.65 220.05H689.95M680.65 224.9H689.95M680.65 229.75H689.95M680.65 234.6H689.95M680.65 239.45H689.95" stroke="#111" stroke-width=".85" fill="none"/>
<path transform="matrix(0.02121 0 0 -0.01862 681.09 244.37)" d="M159 -1Q111 -1 80 22Q50 44 50 90Q50 141 78 182Q107 222 153 246Q199 269 251 269Q295 269 321 246Q347 222 347 179Q347 130 321 89Q295 48 252 24Q210 -1 159 -1ZM77 66Q77 56 84 48Q92 40 105 40Q140 40 192 69Q227 89 256 114Q284 138 301 162Q318 187 318 204Q318 215 312 222Q307 230 293 230Q274 230 247 218Q220 206 190 187Q161 168 135 146Q109 123 93 102Q77 81 77 66Z" class="g"/>
<path d="M688.1 241.07V205.5" stroke="#111" stroke-width=".7" fill="none"/>
<path transform="matrix(0.01940 0 0 -0.01940 704.33 244.44)" d="M226 316V-221H195V-9L50 -46V486H83V279ZM197 84V212L81 183V56Z" class="g"/>
<path d="M710.15 220.05H719.45M710.15 224.9H719.45M710.15 229.75H719.45M710.15 234.6H719.45M710.15 239.45H719.45" stroke="#111" stroke-width=".85" fill="none"/>
<path transform="matrix(0.02121 0 0 -0.01862 710.59 244.37)" d="M159 -1Q111 -1 80 22Q50 44 50 90Q50 141 78 182Q107 222 153 246Q199 269 251 269Q295 269 321 246Q347 222 347 179Q347 130 321 89Q295 48 252 24Q210 -1 159 -1ZM77 66Q77 56 84 48Q92 40 105 40Q140 40 192 69Q227 89 256 114Q284 138 301 162Q318 187 318 204Q318 215 312 222Q307 230 293 230Q274 230 247 218Q220 206 190 187Q161 168 135 146Q109 123 93 102Q77 81 77 66Z" class="g"/>
<path d="M717.6 241.07V205.5" stroke="#111" stroke-width=".7" fill="none"/>
<path d="M270.2 395.8H741.2M270.2 400.65H741.2M270.2 405.5H741.2M270.2 410.35H741.2M270.2 415.2H741.2" stroke="#2a2a2a" stroke-width=".8" fill="none"/>
<path d="M270.2 433.8H741.2M270.2 438.65H741.2M270.2 443.5H741.2M270.2 448.35H741.2M270.2 453.2H741.2" stroke="#2a2a2a" stroke-width=".8" fill="none"/>
<path d="M270.2 500H741.2M270.2 504.85H741.2M270.2 509.7H741.2M270.2 514.55H741.2M270.2 519.4H741.2" stroke="#2a2a2a" stroke-width=".8" fill="none"/>
<path d="M270.2 538.1H741.2M270.2 542.95H741.2M270.2 547.8H741.2M270.2 552.65H741.2M270.2 557.5H741.2" stroke="#2a2a2a" stroke-width=".8" fill="none"/>
<path d="M270.2 395.55V545" stroke="#111" stroke-width="0.95" fill="none"/>
<path d="M378.8 395.55V415.45" stroke="#111" stroke-width="0.95" fill="none"/>
<path d="M378.8 433.55V519.65" stroke="#111" stroke-width="0.95" fill="none"/>
<path d="M378.8 537.85V545" stroke="#111" stroke-width="0.95" fill="none"/>
<path d="M441.5 395.55V415.45" stroke="#111" stroke-width="0.95" fill="none"/>
<path d="M441.5 433.55V519.65" stroke="#111" stroke-width="0.95" fill="none"/>
<path d="M441.5 537.85V545" stroke="#111" stroke-width="0.95" fill="none"/>
<path d="M492.8 395.55V415.45" stroke="#111" stroke-width="0.95" fill="none"/>
<path d="M492.8 433.55V519.65" stroke="#111" stroke-width="0.95" fill="none"/>
<path d="M492.8 537.85V545" stroke="#111" stroke-width="0.95" fill="none"/>
<path d="M567.6 395.55V415.45" stroke="#111" stroke-width="0.95" fill="none"/>
<path d="M567.6 433.55V519.65" stroke="#111" stroke-width="0.95" fill="none"/>
<path d="M567.6 537.85V545" stroke="#111" stroke-width="0.95" fill="none"/>
<path d="M621.7 395.55V415.45" stroke="#111" stroke-width="0.95" fill="none"/>
<path d="M621.7 433.55V519.65" stroke="#111" stroke-width="0.95" fill="none"/>
<path d="M621.7 537.85V545" stroke="#111" stroke-width="0.95" fill="none"/>
<path d="M682 395.55V415.45" stroke="#111" stroke-width="0.95" fill="none"/>
<path d="M682 433.55V519.65" stroke="#111" stroke-width="0.95" fill="none"/>
<path d="M682 537.85V545" stroke="#111" stroke-width="0.95" fill="none"/>
<path d="M741.2 395.55V415.45" stroke="#111" stroke-width="0.95" fill="none"/>
<path d="M741.2 433.55V519.65" stroke="#111" stroke-width="0.95" fill="none"/>
<path d="M741.2 537.85V545" stroke="#111" stroke-width="0.95" fill="none"/>
<path transform="matrix(0.03106 0 0 -0.08560 262.75 519.4)" d="M53 509Q84 511 107 533Q130 555 130 595Q130 615 125 634Q120 653 108 671Q85 706 68 743Q50 780 50 835Q50 879 72 913Q93 947 129 970Q165 992 207 1000L211 976Q167 954 139 917Q111 880 111 833Q111 807 120 778Q128 750 144 718Q176 654 176 602Q176 577 168 558Q163 545 152 532Q141 518 131 509Q121 500 117 500Q138 490 157 462Q176 433 176 398Q176 345 144 283Q111 220 111 167Q111 120 139 84Q167 47 211 24L207 0Q165 8 129 30Q93 53 72 88Q50 122 50 165Q50 210 60 240Q71 271 90 298Q105 320 118 347Q130 374 130 405Q130 445 108 466Q85 487 53 491Z"/>
<path transform="matrix(0.03106 0 0 -0.05600 262.75 594.1)" d="M53 509Q84 511 107 533Q130 555 130 595Q130 615 125 634Q120 653 108 671Q85 706 68 743Q50 780 50 835Q50 879 72 913Q93 947 129 970Q165 992 207 1000L211 976Q167 954 139 917Q111 880 111 833Q111 807 120 778Q128 750 144 718Q176 654 176 602Q176 577 168 558Q163 545 152 532Q141 518 131 509Q121 500 117 500Q138 490 157 462Q176 433 176 398Q176 345 144 283Q111 220 111 167Q111 120 139 84Q167 47 211 24L207 0Q165 8 129 30Q93 53 72 88Q50 122 50 165Q50 210 60 240Q71 271 90 298Q105 320 118 347Q130 374 130 405Q130 445 108 466Q85 487 53 491Z"/>
<path transform="matrix(0.01940 0 0 -0.01940 274.43 415.2)" d="M314 801Q300 854 291 906Q282 958 282 1012Q282 1059 288 1100Q295 1142 307 1177Q320 1217 341 1252Q362 1288 386 1311Q409 1334 427 1334Q451 1334 493 1249Q514 1206 524 1156Q534 1106 534 1049Q534 978 515 908Q496 837 460 775Q423 713 372 666L407 498Q422 500 432 501Q442 502 447 502Q508 502 556 468Q604 433 632 377Q661 321 661 254Q661 177 622 116Q582 54 503 25Q508 8 532 -117Q538 -147 541 -164Q544 -182 545 -195Q546 -208 546 -225Q546 -275 522 -314Q497 -354 456 -376Q414 -398 363 -398Q311 -398 271 -378Q231 -359 208 -324Q185 -290 185 -245Q185 -197 212 -165Q238 -133 287 -133Q329 -133 356 -164Q382 -194 382 -236Q382 -272 357 -299Q332 -326 292 -326H282Q308 -365 364 -365Q433 -365 472 -320Q511 -275 511 -205Q511 -188 507 -160Q503 -131 493 -91Q483 -51 478 -25Q472 1 470 12Q436 2 390 2Q304 2 222 52Q142 102 96 184Q50 266 50 361Q50 451 91 530Q132 609 192 675Q253 741 314 801ZM341 826Q364 838 390 870Q416 903 440 945Q464 987 479 1030Q494 1072 494 1106Q494 1142 483 1163Q472 1184 445 1184Q421 1184 398 1162Q376 1140 358 1104Q341 1067 331 1022Q321 977 321 930Q321 898 328 872Q334 846 341 826ZM398 379Q371 373 347 354Q323 334 308 306Q294 279 294 248Q294 223 307 196Q320 170 339 154Q352 142 365 136Q380 129 380 123Q380 120 370 117Q332 126 302 151Q271 176 254 212Q236 247 236 287Q236 330 254 370Q271 410 302 442Q334 474 374 490L345 641Q229 547 174 456Q120 366 120 277Q120 212 154 156Q188 100 247 66Q306 31 380 31Q400 31 420 35Q441 39 464 45ZM495 55Q593 97 593 227Q593 270 571 306Q549 341 512 362Q475 383 429 383Z" class="g"/>
<path transform="matrix(0.01940 0 0 -0.01940 291.93 407.44)" d="M50 615H81V225Q118 262 165 262Q197 262 223 240Q249 219 249 178Q249 146 230 119Q211 92 179 65L110 6Q91 -10 76 -26Q61 -41 50 -55ZM81 12Q107 40 125 64Q143 87 153 105Q164 124 170 140Q175 156 175 170Q175 198 162 210Q149 223 134 223Q118 223 102 212Q87 200 81 180Z" class="g"/>
<path transform="matrix(0.01940 0 0 -0.01940 297.03 400.17)" d="M50 615H81V225Q118 262 165 262Q197 262 223 240Q249 219 249 178Q249 146 230 119Q211 92 179 65L110 6Q91 -10 76 -26Q61 -41 50 -55ZM81 12Q107 40 125 64Q143 87 153 105Q164 124 170 140Q175 156 175 170Q175 198 162 210Q149 223 134 223Q118 223 102 212Q87 200 81 180Z" class="g"/>
<path transform="matrix(0.01940 0 0 -0.01940 302.83 409.87)" d="M50 615H81V225Q118 262 165 262Q197 262 223 240Q249 219 249 178Q249 146 230 119Q211 92 179 65L110 6Q91 -10 76 -26Q61 -41 50 -55ZM81 12Q107 40 125 64Q143 87 153 105Q164 124 170 140Q175 156 175 170Q175 198 162 210Q149 223 134 223Q118 223 102 212Q87 200 81 180Z" class="g"/>
<path transform="matrix(0.01940 0 0 -0.01940 274.43 453.2)" d="M314 801Q300 854 291 906Q282 958 282 1012Q282 1059 288 1100Q295 1142 307 1177Q320 1217 341 1252Q362 1288 386 1311Q409 1334 427 1334Q451 1334 493 1249Q514 1206 524 1156Q534 1106 534 1049Q534 978 515 908Q496 837 460 775Q423 713 372 666L407 498Q422 500 432 501Q442 502 447 502Q508 502 556 468Q604 433 632 377Q661 321 661 254Q661 177 622 116Q582 54 503 25Q508 8 532 -117Q538 -147 541 -164Q544 -182 545 -195Q546 -208 546 -225Q546 -275 522 -314Q497 -354 456 -376Q414 -398 363 -398Q311 -398 271 -378Q231 -359 208 -324Q185 -290 185 -245Q185 -197 212 -165Q238 -133 287 -133Q329 -133 356 -164Q382 -194 382 -236Q382 -272 357 -299Q332 -326 292 -326H282Q308 -365 364 -365Q433 -365 472 -320Q511 -275 511 -205Q511 -188 507 -160Q503 -131 493 -91Q483 -51 478 -25Q472 1 470 12Q436 2 390 2Q304 2 222 52Q142 102 96 184Q50 266 50 361Q50 451 91 530Q132 609 192 675Q253 741 314 801ZM341 826Q364 838 390 870Q416 903 440 945Q464 987 479 1030Q494 1072 494 1106Q494 1142 483 1163Q472 1184 445 1184Q421 1184 398 1162Q376 1140 358 1104Q341 1067 331 1022Q321 977 321 930Q321 898 328 872Q334 846 341 826ZM398 379Q371 373 347 354Q323 334 308 306Q294 279 294 248Q294 223 307 196Q320 170 339 154Q352 142 365 136Q380 129 380 123Q380 120 370 117Q332 126 302 151Q271 176 254 212Q236 247 236 287Q236 330 254 370Q271 410 302 442Q334 474 374 490L345 641Q229 547 174 456Q120 366 120 277Q120 212 154 156Q188 100 247 66Q306 31 380 31Q400 31 420 35Q441 39 464 45ZM495 55Q593 97 593 227Q593 270 571 306Q549 341 512 362Q475 383 429 383Z" class="g"/>
<path transform="matrix(0.01940 0 0 -0.01940 291.93 445.44)" d="M50 615H81V225Q118 262 165 262Q197 262 223 240Q249 219 249 178Q249 146 230 119Q211 92 179 65L110 6Q91 -10 76 -26Q61 -41 50 -55ZM81 12Q107 40 125 64Q143 87 153 105Q164 124 170 140Q175 156 175 170Q175 198 162 210Q149 223 134 223Q118 223 102 212Q87 200 81 180Z" class="g"/>
<path transform="matrix(0.01940 0 0 -0.01940 297.03 438.17)" d="M50 615H81V225Q118 262 165 262Q197 262 223 240Q249 219 249 178Q249 146 230 119Q211 92 179 65L110 6Q91 -10 76 -26Q61 -41 50 -55ZM81 12Q107 40 125 64Q143 87 153 105Q164 124 170 140Q175 156 175 170Q175 198 162 210Q149 223 134 223Q118 223 102 212Q87 200 81 180Z" class="g"/>
<path transform="matrix(0.01940 0 0 -0.01940 302.83 447.87)" d="M50 615H81V225Q118 262 165 262Q197 262 223 240Q249 219 249 178Q249 146 230 119Q211 92 179 65L110 6Q91 -10 76 -26Q61 -41 50 -55ZM81 12Q107 40 125 64Q143 87 153 105Q164 124 170 140Q175 156 175 170Q175 198 162 210Q149 223 134 223Q118 223 102 212Q87 200 81 180Z" class="g"/>
<path transform="matrix(0.01824 0 0 -0.02056 274.09 519.57)" d="M50 123Q216 231 288 301Q336 348 373 408Q410 469 432 536Q453 603 453 669Q453 728 435 774Q417 819 383 845Q349 871 302 871Q284 871 264 867Q245 863 224 855Q181 839 158 814Q135 788 135 765Q135 756 143 752Q151 748 158 748Q168 748 183 752Q190 754 196 755Q203 756 210 756Q248 756 272 734Q296 711 296 674Q296 638 266 612Q236 586 195 586Q146 586 111 617Q76 648 76 697Q76 756 109 802Q142 848 198 874Q255 900 324 900Q400 900 460 867Q520 834 556 776Q591 719 591 646Q591 551 538 464Q511 419 476 379Q442 339 389 298Q336 256 256 208Q176 160 57 101ZM687 809Q710 809 726 793Q742 777 742 754Q742 731 726 716Q710 700 687 700Q664 700 648 716Q632 731 632 754Q632 777 648 793Q664 809 687 809ZM687 589Q710 589 726 573Q742 557 742 534Q742 511 726 496Q710 480 687 480Q664 480 648 496Q632 511 632 534Q632 557 648 573Q664 589 687 589Z" class="g"/>
<path transform="matrix(0.01940 0 0 -0.01940 291.93 516.49)" d="M50 615H81V225Q118 262 165 262Q197 262 223 240Q249 219 249 178Q249 146 230 119Q211 92 179 65L110 6Q91 -10 76 -26Q61 -41 50 -55ZM81 12Q107 40 125 64Q143 87 153 105Q164 124 170 140Q175 156 175 170Q175 198 162 210Q149 223 134 223Q118 223 102 212Q87 200 81 180Z" class="g"/>
<path transform="matrix(0.01940 0 0 -0.01940 297.03 509.21)" d="M50 615H81V225Q118 262 165 262Q197 262 223 240Q249 219 249 178Q249 146 230 119Q211 92 179 65L110 6Q91 -10 76 -26Q61 -41 50 -55ZM81 12Q107 40 125 64Q143 87 153 105Q164 124 170 140Q175 156 175 170Q175 198 162 210Q149 223 134 223Q118 223 102 212Q87 200 81 180Z" class="g"/>
<path transform="matrix(0.01940 0 0 -0.01940 302.83 518.92)" d="M50 615H81V225Q118 262 165 262Q197 262 223 240Q249 219 249 178Q249 146 230 119Q211 92 179 65L110 6Q91 -10 76 -26Q61 -41 50 -55ZM81 12Q107 40 125 64Q143 87 153 105Q164 124 170 140Q175 156 175 170Q175 198 162 210Q149 223 134 223Q118 223 102 212Q87 200 81 180Z" class="g"/>
<path transform="matrix(0.01940 0 0 -0.01940 274.43 557.5)" d="M314 801Q300 854 291 906Q282 958 282 1012Q282 1059 288 1100Q295 1142 307 1177Q320 1217 341 1252Q362 1288 386 1311Q409 1334 427 1334Q451 1334 493 1249Q514 1206 524 1156Q534 1106 534 1049Q534 978 515 908Q496 837 460 775Q423 713 372 666L407 498Q422 500 432 501Q442 502 447 502Q508 502 556 468Q604 433 632 377Q661 321 661 254Q661 177 622 116Q582 54 503 25Q508 8 532 -117Q538 -147 541 -164Q544 -182 545 -195Q546 -208 546 -225Q546 -275 522 -314Q497 -354 456 -376Q414 -398 363 -398Q311 -398 271 -378Q231 -359 208 -324Q185 -290 185 -245Q185 -197 212 -165Q238 -133 287 -133Q329 -133 356 -164Q382 -194 382 -236Q382 -272 357 -299Q332 -326 292 -326H282Q308 -365 364 -365Q433 -365 472 -320Q511 -275 511 -205Q511 -188 507 -160Q503 -131 493 -91Q483 -51 478 -25Q472 1 470 12Q436 2 390 2Q304 2 222 52Q142 102 96 184Q50 266 50 361Q50 451 91 530Q132 609 192 675Q253 741 314 801ZM341 826Q364 838 390 870Q416 903 440 945Q464 987 479 1030Q494 1072 494 1106Q494 1142 483 1163Q472 1184 445 1184Q421 1184 398 1162Q376 1140 358 1104Q341 1067 331 1022Q321 977 321 930Q321 898 328 872Q334 846 341 826ZM398 379Q371 373 347 354Q323 334 308 306Q294 279 294 248Q294 223 307 196Q320 170 339 154Q352 142 365 136Q380 129 380 123Q380 120 370 117Q332 126 302 151Q271 176 254 212Q236 247 236 287Q236 330 254 370Q271 410 302 442Q334 474 374 490L345 641Q229 547 174 456Q120 366 120 277Q120 212 154 156Q188 100 247 66Q306 31 380 31Q400 31 420 35Q441 39 464 45ZM495 55Q593 97 593 227Q593 270 571 306Q549 341 512 362Q475 383 429 383Z" class="g"/>
<path transform="matrix(0.01940 0 0 -0.01940 291.93 549.74)" d="M50 615H81V225Q118 262 165 262Q197 262 223 240Q249 219 249 178Q249 146 230 119Q211 92 179 65L110 6Q91 -10 76 -26Q61 -41 50 -55ZM81 12Q107 40 125 64Q143 87 153 105Q164 124 170 140Q175 156 175 170Q175 198 162 210Q149 223 134 223Q118 223 102 212Q87 200 81 180Z" class="g"/>
<path transform="matrix(0.01940 0 0 -0.01940 297.03 542.47)" d="M50 615H81V225Q118 262 165 262Q197 262 223 240Q249 219 249 178Q249 146 230 119Q211 92 179 65L110 6Q91 -10 76 -26Q61 -41 50 -55ZM81 12Q107 40 125 64Q143 87 153 105Q164 124 170 140Q175 156 175 170Q175 198 162 210Q149 223 134 223Q118 223 102 212Q87 200 81 180Z" class="g"/>
<path transform="matrix(0.01940 0 0 -0.01940 302.83 552.17)" d="M50 615H81V225Q118 262 165 262Q197 262 223 240Q249 219 249 178Q249 146 230 119Q211 92 179 65L110 6Q91 -10 76 -26Q61 -41 50 -55ZM81 12Q107 40 125 64Q143 87 153 105Q164 124 170 140Q175 156 175 170Q175 198 162 210Q149 223 134 223Q118 223 102 212Q87 200 81 180Z" class="g"/>
<text x="269.4" y="385.9" font-size="8.4" fill="#333" font-style="italic">8</text>
<text x="239.2" y="409" font-size="10" fill="#222" textLength="19.6" lengthAdjust="spacingAndGlyphs" stroke="#222" stroke-width=".2">Pno.</text>
<text x="239.2" y="480" font-size="10" fill="#222" textLength="19.6" lengthAdjust="spacingAndGlyphs" stroke="#222" stroke-width=".2">Pno.</text>
<rect x="347.1" y="504.85" width="6.2" height="2.7"/>
<rect x="407" y="504.85" width="6.2" height="2.7"/>
<rect x="464.1" y="504.85" width="6.2" height="2.7"/>
<rect x="527.1" y="504.85" width="6.2" height="2.7"/>
<rect x="591.5" y="504.85" width="6.2" height="2.7"/>
<rect x="648.7" y="504.85" width="6.2" height="2.7"/>
<rect x="708.5" y="504.85" width="6.2" height="2.7"/>
<path transform="matrix(0.01568 0 0 -0.01769 310.82 413.31)" d="M50 123Q216 231 288 301Q336 348 373 408Q410 469 432 536Q453 603 453 669Q453 728 435 774Q417 819 383 845Q349 871 302 871Q284 871 264 867Q245 863 224 855Q181 839 158 814Q135 788 135 765Q135 756 143 752Q151 748 158 748Q168 748 183 752Q190 754 196 755Q203 756 210 756Q248 756 272 734Q296 711 296 674Q296 638 266 612Q236 586 195 586Q146 586 111 617Q76 648 76 697Q76 756 109 802Q142 848 198 874Q255 900 324 900Q400 900 460 867Q520 834 556 776Q591 719 591 646Q591 551 538 464Q511 419 476 379Q442 339 389 298Q336 256 256 208Q176 160 57 101ZM687 809Q710 809 726 793Q742 777 742 754Q742 731 726 716Q710 700 687 700Q664 700 648 716Q632 731 632 754Q632 777 648 793Q664 809 687 809ZM687 589Q710 589 726 573Q742 557 742 534Q742 511 726 496Q710 480 687 480Q664 480 648 496Q632 511 632 534Q632 557 648 573Q664 589 687 589Z" class="g"/>
<path transform="matrix(0.02121 0 0 -0.01862 324.59 395.87)" d="M159 -1Q111 -1 80 22Q50 44 50 90Q50 141 78 182Q107 222 153 246Q199 269 251 269Q295 269 321 246Q347 222 347 179Q347 130 321 89Q295 48 252 24Q210 -1 159 -1ZM77 66Q77 56 84 48Q92 40 105 40Q140 40 192 69Q227 89 256 114Q284 138 301 162Q318 187 318 204Q318 215 312 222Q307 230 293 230Q274 230 247 218Q220 206 190 187Q161 168 135 146Q109 123 93 102Q77 81 77 66Z" class="g"/>
<path d="M326 394.18V410.4" stroke="#111" stroke-width=".7" fill="none"/>
<circle cx="335.2" cy="393.38" r=".95"/>
<path transform="matrix(0.01746 0 0 -0.01668 362.71 413.84)" d="M147 878 307 683Q257 624 230 581Q203 538 203 494Q203 457 227 416Q251 376 303 314L287 292Q243 320 205 320Q177 320 163 302Q149 283 149 257Q149 225 162 196Q176 168 199 142L186 123Q117 173 84 214Q51 255 51 303Q51 346 78 366Q105 386 143 386Q173 386 221 363V365L67 570Q168 659 168 736Q168 797 104 878Z" class="g"/>
<path transform="matrix(0.01746 0 0 -0.01668 384.71 413.84)" d="M147 878 307 683Q257 624 230 581Q203 538 203 494Q203 457 227 416Q251 376 303 314L287 292Q243 320 205 320Q177 320 163 302Q149 283 149 257Q149 225 162 196Q176 168 199 142L186 123Q117 173 84 214Q51 255 51 303Q51 346 78 366Q105 386 143 386Q173 386 221 363V365L67 570Q168 659 168 736Q168 797 104 878Z" class="g"/>
<path transform="matrix(0.02121 0 0 -0.01862 400.49 398.3)" d="M159 -1Q111 -1 80 22Q50 44 50 90Q50 141 78 182Q107 222 153 246Q199 269 251 269Q295 269 321 246Q347 222 347 179Q347 130 321 89Q295 48 252 24Q210 -1 159 -1ZM77 66Q77 56 84 48Q92 40 105 40Q140 40 192 69Q227 89 256 114Q284 138 301 162Q318 187 318 204Q318 215 312 222Q307 230 293 230Q274 230 247 218Q220 206 190 187Q161 168 135 146Q109 123 93 102Q77 81 77 66Z" class="g"/>
<path d="M401.9 396.6V412.5" stroke="#111" stroke-width=".7" fill="none"/>
<circle cx="410.5" cy="393.38" r=".95"/>
<path transform="matrix(0.01746 0 0 -0.01668 447.11 413.84)" d="M147 878 307 683Q257 624 230 581Q203 538 203 494Q203 457 227 416Q251 376 303 314L287 292Q243 320 205 320Q177 320 163 302Q149 283 149 257Q149 225 162 196Q176 168 199 142L186 123Q117 173 84 214Q51 255 51 303Q51 346 78 366Q105 386 143 386Q173 386 221 363V365L67 570Q168 659 168 736Q168 797 104 878Z" class="g"/>
<path transform="matrix(0.02121 0 0 -0.01862 462.49 400.72)" d="M159 -1Q111 -1 80 22Q50 44 50 90Q50 141 78 182Q107 222 153 246Q199 269 251 269Q295 269 321 246Q347 222 347 179Q347 130 321 89Q295 48 252 24Q210 -1 159 -1ZM77 66Q77 56 84 48Q92 40 105 40Q140 40 192 69Q227 89 256 114Q284 138 301 162Q318 187 318 204Q318 215 312 222Q307 230 293 230Q274 230 247 218Q220 206 190 187Q161 168 135 146Q109 123 93 102Q77 81 77 66Z" class="g"/>
<path d="M463.9 399.03V415" stroke="#111" stroke-width=".7" fill="none"/>
<circle cx="473.2" cy="398.23" r=".95"/>
<path transform="matrix(0.02121 0 0 -0.01862 498.79 405.57)" d="M159 -1Q111 -1 80 22Q50 44 50 90Q50 141 78 182Q107 222 153 246Q199 269 251 269Q295 269 321 246Q347 222 347 179Q347 130 321 89Q295 48 252 24Q210 -1 159 -1Z" class="g"/>
<path d="M500.2 403.88V418.2" stroke="#111" stroke-width=".7" fill="none"/>
<path transform="matrix(0.01552 0 0 -0.01552 509.82 414.23)" d="M314 801Q300 854 291 906Q282 958 282 1012Q282 1059 288 1100Q295 1142 307 1177Q320 1217 341 1252Q362 1288 386 1311Q409 1334 427 1334Q451 1334 493 1249Q514 1206 524 1156Q534 1106 534 1049Q534 978 515 908Q496 837 460 775Q423 713 372 666L407 498Q422 500 432 501Q442 502 447 502Q508 502 556 468Q604 433 632 377Q661 321 661 254Q661 177 622 116Q582 54 503 25Q508 8 532 -117Q538 -147 541 -164Q544 -182 545 -195Q546 -208 546 -225Q546 -275 522 -314Q497 -354 456 -376Q414 -398 363 -398Q311 -398 271 -378Q231 -359 208 -324Q185 -290 185 -245Q185 -197 212 -165Q238 -133 287 -133Q329 -133 356 -164Q382 -194 382 -236Q382 -272 357 -299Q332 -326 292 -326H282Q308 -365 364 -365Q433 -365 472 -320Q511 -275 511 -205Q511 -188 507 -160Q503 -131 493 -91Q483 -51 478 -25Q472 1 470 12Q436 2 390 2Q304 2 222 52Q142 102 96 184Q50 266 50 361Q50 451 91 530Q132 609 192 675Q253 741 314 801ZM341 826Q364 838 390 870Q416 903 440 945Q464 987 479 1030Q494 1072 494 1106Q494 1142 483 1163Q472 1184 445 1184Q421 1184 398 1162Q376 1140 358 1104Q341 1067 331 1022Q321 977 321 930Q321 898 328 872Q334 846 341 826ZM398 379Q371 373 347 354Q323 334 308 306Q294 279 294 248Q294 223 307 196Q320 170 339 154Q352 142 365 136Q380 129 380 123Q380 120 370 117Q332 126 302 151Q271 176 254 212Q236 247 236 287Q236 330 254 370Q271 410 302 442Q334 474 374 490L345 641Q229 547 174 456Q120 366 120 277Q120 212 154 156Q188 100 247 66Q306 31 380 31Q400 31 420 35Q441 39 464 45ZM495 55Q593 97 593 227Q593 270 571 306Q549 341 512 362Q475 383 429 383Z" class="g"/>
<path transform="matrix(0.02121 0 0 -0.01862 520.49 420.12)" d="M159 -1Q111 -1 80 22Q50 44 50 90Q50 141 78 182Q107 222 153 246Q199 269 251 269Q295 269 321 246Q347 222 347 179Q347 130 321 89Q295 48 252 24Q210 -1 159 -1Z" class="g"/>
<path d="M527.5 416.82V400.65" stroke="#111" stroke-width=".7" fill="none"/>
<path transform="matrix(0.02121 0 0 -0.01862 535.79 417.7)" d="M159 -1Q111 -1 80 22Q50 44 50 90Q50 141 78 182Q107 222 153 246Q199 269 251 269Q295 269 321 246Q347 222 347 179Q347 130 321 89Q295 48 252 24Q210 -1 159 -1Z" class="g"/>
<path d="M542.8 414.4V398.22" stroke="#111" stroke-width=".7" fill="none"/>
<path transform="matrix(0.02121 0 0 -0.01862 550.79 415.27)" d="M159 -1Q111 -1 80 22Q50 44 50 90Q50 141 78 182Q107 222 153 246Q199 269 251 269Q295 269 321 246Q347 222 347 179Q347 130 321 89Q295 48 252 24Q210 -1 159 -1Z" class="g"/>
<path d="M557.8 411.98V395.8" stroke="#111" stroke-width=".7" fill="none"/>
<path transform="matrix(0.02121 0 0 -0.01862 576.29 417.7)" d="M159 -1Q111 -1 80 22Q50 44 50 90Q50 141 78 182Q107 222 153 246Q199 269 251 269Q295 269 321 246Q347 222 347 179Q347 130 321 89Q295 48 252 24Q210 -1 159 -1ZM77 66Q77 56 84 48Q92 40 105 40Q140 40 192 69Q227 89 256 114Q284 138 301 162Q318 187 318 204Q318 215 312 222Q307 230 293 230Q274 230 247 218Q220 206 190 187Q161 168 135 146Q109 123 93 102Q77 81 77 66Z" class="g"/>
<path d="M583.3 414.4V398.22" stroke="#111" stroke-width=".7" fill="none"/>
<circle cx="587.1" cy="412.78" r=".95"/>
<path transform="matrix(0.01746 0 0 -0.01668 605.11 413.84)" d="M147 878 307 683Q257 624 230 581Q203 538 203 494Q203 457 227 416Q251 376 303 314L287 292Q243 320 205 320Q177 320 163 302Q149 283 149 257Q149 225 162 196Q176 168 199 142L186 123Q117 173 84 214Q51 255 51 303Q51 346 78 366Q105 386 143 386Q173 386 221 363V365L67 570Q168 659 168 736Q168 797 104 878Z" class="g"/>
<path transform="matrix(0.01746 0 0 -0.01668 627.61 413.84)" d="M147 878 307 683Q257 624 230 581Q203 538 203 494Q203 457 227 416Q251 376 303 314L287 292Q243 320 205 320Q177 320 163 302Q149 283 149 257Q149 225 162 196Q176 168 199 142L186 123Q117 173 84 214Q51 255 51 303Q51 346 78 366Q105 386 143 386Q173 386 221 363V365L67 570Q168 659 168 736Q168 797 104 878Z" class="g"/>
<path transform="matrix(0.01940 0 0 -0.01940 637.23 419.56)" d="M50 615H81V225Q118 262 165 262Q197 262 223 240Q249 219 249 178Q249 146 230 119Q211 92 179 65L110 6Q91 -10 76 -26Q61 -41 50 -55ZM81 12Q107 40 125 64Q143 87 153 105Q164 124 170 140Q175 156 175 170Q175 198 162 210Q149 223 134 223Q118 223 102 212Q87 200 81 180Z" class="g"/>
<path transform="matrix(0.02121 0 0 -0.01862 642.69 420.12)" d="M159 -1Q111 -1 80 22Q50 44 50 90Q50 141 78 182Q107 222 153 246Q199 269 251 269Q295 269 321 246Q347 222 347 179Q347 130 321 89Q295 48 252 24Q210 -1 159 -1ZM77 66Q77 56 84 48Q92 40 105 40Q140 40 192 69Q227 89 256 114Q284 138 301 162Q318 187 318 204Q318 215 312 222Q307 230 293 230Q274 230 247 218Q220 206 190 187Q161 168 135 146Q109 123 93 102Q77 81 77 66Z" class="g"/>
<path d="M649.7 416.82V400.65" stroke="#111" stroke-width=".7" fill="none"/>
<circle cx="653.8" cy="417.62" r=".95"/>
<path transform="matrix(0.01746 0 0 -0.01668 688.41 413.84)" d="M147 878 307 683Q257 624 230 581Q203 538 203 494Q203 457 227 416Q251 376 303 314L287 292Q243 320 205 320Q177 320 163 302Q149 283 149 257Q149 225 162 196Q176 168 199 142L186 123Q117 173 84 214Q51 255 51 303Q51 346 78 366Q105 386 143 386Q173 386 221 363V365L67 570Q168 659 168 736Q168 797 104 878Z" class="g"/>
<path transform="matrix(0.01568 0 0 -0.01769 695.82 413.31)" d="M50 123Q216 231 288 301Q336 348 373 408Q410 469 432 536Q453 603 453 669Q453 728 435 774Q417 819 383 845Q349 871 302 871Q284 871 264 867Q245 863 224 855Q181 839 158 814Q135 788 135 765Q135 756 143 752Q151 748 158 748Q168 748 183 752Q190 754 196 755Q203 756 210 756Q248 756 272 734Q296 711 296 674Q296 638 266 612Q236 586 195 586Q146 586 111 617Q76 648 76 697Q76 756 109 802Q142 848 198 874Q255 900 324 900Q400 900 460 867Q520 834 556 776Q591 719 591 646Q591 551 538 464Q511 419 476 379Q442 339 389 298Q336 256 256 208Q176 160 57 101ZM687 809Q710 809 726 793Q742 777 742 754Q742 731 726 716Q710 700 687 700Q664 700 648 716Q632 731 632 754Q632 777 648 793Q664 809 687 809ZM687 589Q710 589 726 573Q742 557 742 534Q742 511 726 496Q710 480 687 480Q664 480 648 496Q632 511 632 534Q632 557 648 573Q664 589 687 589Z" class="g"/>
<path d="M709.55 390.95H718.85" stroke="#111" stroke-width=".85" fill="none"/>
<path transform="matrix(0.02121 0 0 -0.01862 709.99 393.45)" d="M159 -1Q111 -1 80 22Q50 44 50 90Q50 141 78 182Q107 222 153 246Q199 269 251 269Q295 269 321 246Q347 222 347 179Q347 130 321 89Q295 48 252 24Q210 -1 159 -1ZM77 66Q77 56 84 48Q92 40 105 40Q140 40 192 69Q227 89 256 114Q284 138 301 162Q318 187 318 204Q318 215 312 222Q307 230 293 230Q274 230 247 218Q220 206 190 187Q161 168 135 146Q109 123 93 102Q77 81 77 66Z" class="g"/>
<path d="M711.4 391.75V407.5" stroke="#111" stroke-width=".7" fill="none"/>
<circle cx="721.4" cy="388.53" r=".95"/>
<path d="M324.35 458.05H333.65M324.35 462.9H333.65M324.35 467.75H333.65M324.35 472.6H333.65M324.35 477.45H333.65" stroke="#111" stroke-width=".85" fill="none"/>
<path transform="matrix(0.02121 0 0 -0.01862 324.79 479.95)" d="M159 -1Q111 -1 80 22Q50 44 50 90Q50 141 78 182Q107 222 153 246Q199 269 251 269Q295 269 321 246Q347 222 347 179Q347 130 321 89Q295 48 252 24Q210 -1 159 -1ZM77 66Q77 56 84 48Q92 40 105 40Q140 40 192 69Q227 89 256 114Q284 138 301 162Q318 187 318 204Q318 215 312 222Q307 230 293 230Q274 230 247 218Q220 206 190 187Q161 168 135 146Q109 123 93 102Q77 81 77 66Z" class="g"/>
<path d="M331.8 476.65V443.5" stroke="#111" stroke-width=".7" fill="none"/>
<path d="M346.75 458.05H356.05M346.75 462.9H356.05M346.75 467.75H356.05M346.75 472.6H356.05M346.75 477.45H356.05" stroke="#111" stroke-width=".85" fill="none"/>
<path transform="matrix(0.02121 0 0 -0.01862 347.19 479.95)" d="M159 -1Q111 -1 80 22Q50 44 50 90Q50 141 78 182Q107 222 153 246Q199 269 251 269Q295 269 321 246Q347 222 347 179Q347 130 321 89Q295 48 252 24Q210 -1 159 -1Z" class="g"/>
<path d="M354.2 476.65V443.5" stroke="#111" stroke-width=".7" fill="none"/>
<path d="M362.05 458.05H371.35M362.05 462.9H371.35M362.05 467.75H371.35M362.05 472.6H371.35M362.05 477.45H371.35M362.05 482.3H371.35M362.05 487.15H371.35" stroke="#111" stroke-width=".85" fill="none"/>
<path transform="matrix(0.02121 0 0 -0.01862 362.49 489.65)" d="M159 -1Q111 -1 80 22Q50 44 50 90Q50 141 78 182Q107 222 153 246Q199 269 251 269Q295 269 321 246Q347 222 347 179Q347 130 321 89Q295 48 252 24Q210 -1 159 -1Z" class="g"/>
<path d="M369.5 486.35V443.5" stroke="#111" stroke-width=".7" fill="none"/>
<path d="M384.15 458.05H393.45M384.15 462.9H393.45M384.15 467.75H393.45M384.15 472.6H393.45M384.15 477.45H393.45M384.15 482.3H393.45M384.15 487.15H393.45M384.15 492H393.45" stroke="#111" stroke-width=".85" fill="none"/>
<path transform="matrix(0.02121 0 0 -0.01862 384.59 496.92)" d="M159 -1Q111 -1 80 22Q50 44 50 90Q50 141 78 182Q107 222 153 246Q199 269 251 269Q295 269 321 246Q347 222 347 179Q347 130 321 89Q295 48 252 24Q210 -1 159 -1ZM77 66Q77 56 84 48Q92 40 105 40Q140 40 192 69Q227 89 256 114Q284 138 301 162Q318 187 318 204Q318 215 312 222Q307 230 293 230Q274 230 247 218Q220 206 190 187Q161 168 135 146Q109 123 93 102Q77 81 77 66Z" class="g"/>
<path d="M391.6 493.62V443.5" stroke="#111" stroke-width=".7" fill="none"/>
<path transform="matrix(0.01746 0 0 -0.01668 410.11 451.84)" d="M147 878 307 683Q257 624 230 581Q203 538 203 494Q203 457 227 416Q251 376 303 314L287 292Q243 320 205 320Q177 320 163 302Q149 283 149 257Q149 225 162 196Q176 168 199 142L186 123Q117 173 84 214Q51 255 51 303Q51 346 78 366Q105 386 143 386Q173 386 221 363V365L67 570Q168 659 168 736Q168 797 104 878Z" class="g"/>
<path transform="matrix(0.01940 0 0 -0.01940 418.43 484.24)" d="M50 615H81V225Q118 262 165 262Q197 262 223 240Q249 219 249 178Q249 146 230 119Q211 92 179 65L110 6Q91 -10 76 -26Q61 -41 50 -55ZM81 12Q107 40 125 64Q143 87 153 105Q164 124 170 140Q175 156 175 170Q175 198 162 210Q149 223 134 223Q118 223 102 212Q87 200 81 180Z" class="g"/>
<path d="M424.65 458.05H433.95M424.65 462.9H433.95M424.65 467.75H433.95M424.65 472.6H433.95M424.65 477.45H433.95M424.65 482.3H433.95" stroke="#111" stroke-width=".85" fill="none"/>
<path transform="matrix(0.02121 0 0 -0.01862 425.09 484.8)" d="M159 -1Q111 -1 80 22Q50 44 50 90Q50 141 78 182Q107 222 153 246Q199 269 251 269Q295 269 321 246Q347 222 347 179Q347 130 321 89Q295 48 252 24Q210 -1 159 -1Z" class="g"/>
<path d="M432.1 481.5V443.5" stroke="#111" stroke-width=".7" fill="none"/>
<path d="M429 485C434.99 488.59 444.41 488.59 450.4 485C444.41 490.29 434.99 490.29 429 485Z" stroke="#111" stroke-width=".35"/>
<path d="M447.05 458.05H456.35M447.05 462.9H456.35M447.05 467.75H456.35M447.05 472.6H456.35M447.05 477.45H456.35M447.05 482.3H456.35" stroke="#111" stroke-width=".85" fill="none"/>
<path transform="matrix(0.02121 0 0 -0.01862 447.49 484.8)" d="M159 -1Q111 -1 80 22Q50 44 50 90Q50 141 78 182Q107 222 153 246Q199 269 251 269Q295 269 321 246Q347 222 347 179Q347 130 321 89Q295 48 252 24Q210 -1 159 -1Z" class="g"/>
<path d="M454.5 481.5V443.5" stroke="#111" stroke-width=".7" fill="none"/>
<path transform="matrix(0.01940 0 0 -0.01940 456.73 484.86)" d="M226 316V-221H195V-9L50 -46V486H83V279ZM197 84V212L81 183V56Z" class="g"/>
<path d="M462.35 458.05H471.65M462.35 462.9H471.65M462.35 467.75H471.65M462.35 472.6H471.65M462.35 477.45H471.65M462.35 482.3H471.65" stroke="#111" stroke-width=".85" fill="none"/>
<path transform="matrix(0.02121 0 0 -0.01862 462.79 484.8)" d="M159 -1Q111 -1 80 22Q50 44 50 90Q50 141 78 182Q107 222 153 246Q199 269 251 269Q295 269 321 246Q347 222 347 179Q347 130 321 89Q295 48 252 24Q210 -1 159 -1ZM77 66Q77 56 84 48Q92 40 105 40Q140 40 192 69Q227 89 256 114Q284 138 301 162Q318 187 318 204Q318 215 312 222Q307 230 293 230Q274 230 247 218Q220 206 190 187Q161 168 135 146Q109 123 93 102Q77 81 77 66Z" class="g"/>
<path d="M469.8 481.5V443.5" stroke="#111" stroke-width=".7" fill="none"/>
<circle cx="473.7" cy="479.88" r=".95"/>
<path d="M467 485C476.97 489.26 492.63 489.26 502.6 485C492.63 490.96 476.97 490.96 467 485Z" stroke="#111" stroke-width=".35"/>
<path d="M498.55 458.05H507.85M498.55 462.9H507.85M498.55 467.75H507.85M498.55 472.6H507.85M498.55 477.45H507.85M498.55 482.3H507.85" stroke="#111" stroke-width=".85" fill="none"/>
<path transform="matrix(0.02121 0 0 -0.01862 498.99 484.8)" d="M159 -1Q111 -1 80 22Q50 44 50 90Q50 141 78 182Q107 222 153 246Q199 269 251 269Q295 269 321 246Q347 222 347 179Q347 130 321 89Q295 48 252 24Q210 -1 159 -1Z" class="g"/>
<path d="M506 481.5V443.5" stroke="#111" stroke-width=".7" fill="none"/>
<path d="M520.15 458.05H529.45M520.15 462.9H529.45M520.15 467.75H529.45M520.15 472.6H529.45M520.15 477.45H529.45" stroke="#111" stroke-width=".85" fill="none"/>
<path transform="matrix(0.02121 0 0 -0.01862 520.59 482.37)" d="M159 -1Q111 -1 80 22Q50 44 50 90Q50 141 78 182Q107 222 153 246Q199 269 251 269Q295 269 321 246Q347 222 347 179Q347 130 321 89Q295 48 252 24Q210 -1 159 -1ZM77 66Q77 56 84 48Q92 40 105 40Q140 40 192 69Q227 89 256 114Q284 138 301 162Q318 187 318 204Q318 215 312 222Q307 230 293 230Q274 230 247 218Q220 206 190 187Q161 168 135 146Q109 123 93 102Q77 81 77 66Z" class="g"/>
<path d="M527.6 479.07V443.5" stroke="#111" stroke-width=".7" fill="none"/>
<circle cx="531.5" cy="479.88" r=".95"/>
<path transform="matrix(0.01940 0 0 -0.01940 569.93 482.44)" d="M226 316V-221H195V-9L50 -46V486H83V279ZM197 84V212L81 183V56Z" class="g"/>
<path d="M575.55 458.05H584.85M575.55 462.9H584.85M575.55 467.75H584.85M575.55 472.6H584.85M575.55 477.45H584.85" stroke="#111" stroke-width=".85" fill="none"/>
<path transform="matrix(0.02121 0 0 -0.01862 575.99 482.37)" d="M159 -1Q111 -1 80 22Q50 44 50 90Q50 141 78 182Q107 222 153 246Q199 269 251 269Q295 269 321 246Q347 222 347 179Q347 130 321 89Q295 48 252 24Q210 -1 159 -1ZM77 66Q77 56 84 48Q92 40 105 40Q140 40 192 69Q227 89 256 114Q284 138 301 162Q318 187 318 204Q318 215 312 222Q307 230 293 230Q274 230 247 218Q220 206 190 187Q161 168 135 146Q109 123 93 102Q77 81 77 66Z" class="g"/>
<path d="M583 479.07V443.5" stroke="#111" stroke-width=".7" fill="none"/>
<circle cx="587.4" cy="479.88" r=".95"/>
<path d="M605.35 458.05H614.65M605.35 462.9H614.65M605.35 467.75H614.65M605.35 472.6H614.65M605.35 477.45H614.65" stroke="#111" stroke-width=".85" fill="none"/>
<path transform="matrix(0.02121 0 0 -0.01862 605.79 479.95)" d="M159 -1Q111 -1 80 22Q50 44 50 90Q50 141 78 182Q107 222 153 246Q199 269 251 269Q295 269 321 246Q347 222 347 179Q347 130 321 89Q295 48 252 24Q210 -1 159 -1Z" class="g"/>
<path d="M612.8 476.65V443.5" stroke="#111" stroke-width=".7" fill="none"/>
<path d="M609.6 480.4C615.59 483.99 625.01 483.99 631 480.4C625.01 485.69 615.59 485.69 609.6 480.4Z" stroke="#111" stroke-width=".35"/>
<path d="M627.05 458.05H636.35M627.05 462.9H636.35M627.05 467.75H636.35M627.05 472.6H636.35M627.05 477.45H636.35" stroke="#111" stroke-width=".85" fill="none"/>
<path transform="matrix(0.02121 0 0 -0.01862 627.49 479.95)" d="M159 -1Q111 -1 80 22Q50 44 50 90Q50 141 78 182Q107 222 153 246Q199 269 251 269Q295 269 321 246Q347 222 347 179Q347 130 321 89Q295 48 252 24Q210 -1 159 -1Z" class="g"/>
<path d="M634.5 476.65V443.5" stroke="#111" stroke-width=".7" fill="none"/>
<path d="M641.95 458.05H651.25M641.95 462.9H651.25M641.95 467.75H651.25M641.95 472.6H651.25M641.95 477.45H651.25M641.95 482.3H651.25M641.95 487.15H651.25" stroke="#111" stroke-width=".85" fill="none"/>
<path transform="matrix(0.02121 0 0 -0.01862 642.39 489.65)" d="M159 -1Q111 -1 80 22Q50 44 50 90Q50 141 78 182Q107 222 153 246Q199 269 251 269Q295 269 321 246Q347 222 347 179Q347 130 321 89Q295 48 252 24Q210 -1 159 -1ZM77 66Q77 56 84 48Q92 40 105 40Q140 40 192 69Q227 89 256 114Q284 138 301 162Q318 187 318 204Q318 215 312 222Q307 230 293 230Q274 230 247 218Q220 206 190 187Q161 168 135 146Q109 123 93 102Q77 81 77 66Z" class="g"/>
<path d="M649.4 486.35V443.5" stroke="#111" stroke-width=".7" fill="none"/>
<path d="M664.95 458.05H674.25M664.95 462.9H674.25M664.95 467.75H674.25M664.95 472.6H674.25M664.95 477.45H674.25M664.95 482.3H674.25" stroke="#111" stroke-width=".85" fill="none"/>
<path transform="matrix(0.02121 0 0 -0.01862 665.39 487.22)" d="M159 -1Q111 -1 80 22Q50 44 50 90Q50 141 78 182Q107 222 153 246Q199 269 251 269Q295 269 321 246Q347 222 347 179Q347 130 321 89Q295 48 252 24Q210 -1 159 -1Z" class="g"/>
<path d="M672.4 483.93V443.5" stroke="#111" stroke-width=".7" fill="none"/>
<path d="M669.4 487C675.73 490.72 685.67 490.72 692 487C685.67 492.42 675.73 492.42 669.4 487Z" stroke="#111" stroke-width=".35"/>
<path d="M687.75 458.05H697.05M687.75 462.9H697.05M687.75 467.75H697.05M687.75 472.6H697.05M687.75 477.45H697.05M687.75 482.3H697.05" stroke="#111" stroke-width=".85" fill="none"/>
<path transform="matrix(0.02121 0 0 -0.01862 688.19 487.22)" d="M159 -1Q111 -1 80 22Q50 44 50 90Q50 141 78 182Q107 222 153 246Q199 269 251 269Q295 269 321 246Q347 222 347 179Q347 130 321 89Q295 48 252 24Q210 -1 159 -1Z" class="g"/>
<path d="M695.2 483.93V443.5" stroke="#111" stroke-width=".7" fill="none"/>
<path d="M710.55 458.05H719.85M710.55 462.9H719.85M710.55 467.75H719.85M710.55 472.6H719.85M710.55 477.45H719.85" stroke="#111" stroke-width=".85" fill="none"/>
<path transform="matrix(0.02121 0 0 -0.01862 710.99 482.37)" d="M159 -1Q111 -1 80 22Q50 44 50 90Q50 141 78 182Q107 222 153 246Q199 269 251 269Q295 269 321 246Q347 222 347 179Q347 130 321 89Q295 48 252 24Q210 -1 159 -1ZM77 66Q77 56 84 48Q92 40 105 40Q140 40 192 69Q227 89 256 114Q284 138 301 162Q318 187 318 204Q318 215 312 222Q307 230 293 230Q274 230 247 218Q220 206 190 187Q161 168 135 146Q109 123 93 102Q77 81 77 66Z" class="g"/>
<path d="M718 479.07V443.5" stroke="#111" stroke-width=".7" fill="none"/>
<circle cx="721.9" cy="479.88" r=".95"/>
<path d="M715.4 482.6C722.01 486.19 732.39 486.19 739 482.6C732.39 487.89 722.01 487.89 715.4 482.6Z" stroke="#111" stroke-width=".35"/>
<path d="M865.4 157.6H975M865.4 162.45H975M865.4 167.3H975M865.4 172.15H975M865.4 177H975" stroke="#2a2a2a" stroke-width=".8" fill="none"/>
<path d="M865.4 228.8H975M865.4 233.65H975M865.4 238.5H975M865.4 243.35H975M865.4 248.2H975" stroke="#2a2a2a" stroke-width=".8" fill="none"/>
<path d="M865.4 293.9H975M865.4 298.75H975M865.4 303.6H975M865.4 308.45H975M865.4 313.3H975" stroke="#2a2a2a" stroke-width=".8" fill="none"/>
<path d="M865.4 365.6H975M865.4 370.45H975M865.4 375.3H975M865.4 380.15H975M865.4 385H975" stroke="#2a2a2a" stroke-width=".8" fill="none"/>
<path d="M865.4 416H975M865.4 420.85H975M865.4 425.7H975M865.4 430.55H975M865.4 435.4H975" stroke="#2a2a2a" stroke-width=".8" fill="none"/>
<path d="M865.4 157.35V435.65" stroke="#111" stroke-width="0.95" fill="none"/>
<path d="M959.4 157.35V177.25" stroke="#111" stroke-width="0.95" fill="none"/>
<path d="M959.4 228.55V313.55" stroke="#111" stroke-width="0.95" fill="none"/>
<path d="M959.4 365.35V435.65" stroke="#111" stroke-width="0.95" fill="none"/>
<path transform="matrix(0.03106 0 0 -0.08450 857.85 313.3)" d="M53 509Q84 511 107 533Q130 555 130 595Q130 615 125 634Q120 653 108 671Q85 706 68 743Q50 780 50 835Q50 879 72 913Q93 947 129 970Q165 992 207 1000L211 976Q167 954 139 917Q111 880 111 833Q111 807 120 778Q128 750 144 718Q176 654 176 602Q176 577 168 558Q163 545 152 532Q141 518 131 509Q121 500 117 500Q138 490 157 462Q176 433 176 398Q176 345 144 283Q111 220 111 167Q111 120 139 84Q167 47 211 24L207 0Q165 8 129 30Q93 53 72 88Q50 122 50 165Q50 210 60 240Q71 271 90 298Q105 320 118 347Q130 374 130 405Q130 445 108 466Q85 487 53 491Z"/>
<path transform="matrix(0.03106 0 0 -0.06980 857.85 435.4)" d="M53 509Q84 511 107 533Q130 555 130 595Q130 615 125 634Q120 653 108 671Q85 706 68 743Q50 780 50 835Q50 879 72 913Q93 947 129 970Q165 992 207 1000L211 976Q167 954 139 917Q111 880 111 833Q111 807 120 778Q128 750 144 718Q176 654 176 602Q176 577 168 558Q163 545 152 532Q141 518 131 509Q121 500 117 500Q138 490 157 462Q176 433 176 398Q176 345 144 283Q111 220 111 167Q111 120 139 84Q167 47 211 24L207 0Q165 8 129 30Q93 53 72 88Q50 122 50 165Q50 210 60 240Q71 271 90 298Q105 320 118 347Q130 374 130 405Q130 445 108 466Q85 487 53 491Z"/>
<path transform="matrix(0.01940 0 0 -0.01940 869.43 177)" d="M314 801Q300 854 291 906Q282 958 282 1012Q282 1059 288 1100Q295 1142 307 1177Q320 1217 341 1252Q362 1288 386 1311Q409 1334 427 1334Q451 1334 493 1249Q514 1206 524 1156Q534 1106 534 1049Q534 978 515 908Q496 837 460 775Q423 713 372 666L407 498Q422 500 432 501Q442 502 447 502Q508 502 556 468Q604 433 632 377Q661 321 661 254Q661 177 622 116Q582 54 503 25Q508 8 532 -117Q538 -147 541 -164Q544 -182 545 -195Q546 -208 546 -225Q546 -275 522 -314Q497 -354 456 -376Q414 -398 363 -398Q311 -398 271 -378Q231 -359 208 -324Q185 -290 185 -245Q185 -197 212 -165Q238 -133 287 -133Q329 -133 356 -164Q382 -194 382 -236Q382 -272 357 -299Q332 -326 292 -326H282Q308 -365 364 -365Q433 -365 472 -320Q511 -275 511 -205Q511 -188 507 -160Q503 -131 493 -91Q483 -51 478 -25Q472 1 470 12Q436 2 390 2Q304 2 222 52Q142 102 96 184Q50 266 50 361Q50 451 91 530Q132 609 192 675Q253 741 314 801ZM341 826Q364 838 390 870Q416 903 440 945Q464 987 479 1030Q494 1072 494 1106Q494 1142 483 1163Q472 1184 445 1184Q421 1184 398 1162Q376 1140 358 1104Q341 1067 331 1022Q321 977 321 930Q321 898 328 872Q334 846 341 826ZM398 379Q371 373 347 354Q323 334 308 306Q294 279 294 248Q294 223 307 196Q320 170 339 154Q352 142 365 136Q380 129 380 123Q380 120 370 117Q332 126 302 151Q271 176 254 212Q236 247 236 287Q236 330 254 370Q271 410 302 442Q334 474 374 490L345 641Q229 547 174 456Q120 366 120 277Q120 212 154 156Q188 100 247 66Q306 31 380 31Q400 31 420 35Q441 39 464 45ZM495 55Q593 97 593 227Q593 270 571 306Q549 341 512 362Q475 383 429 383Z" class="g"/>
<path transform="matrix(0.01940 0 0 -0.01940 886.23 169.24)" d="M50 615H81V225Q118 262 165 262Q197 262 223 240Q249 219 249 178Q249 146 230 119Q211 92 179 65L110 6Q91 -10 76 -26Q61 -41 50 -55ZM81 12Q107 40 125 64Q143 87 153 105Q164 124 170 140Q175 156 175 170Q175 198 162 210Q149 223 134 223Q118 223 102 212Q87 200 81 180Z" class="g"/>
<path transform="matrix(0.01940 0 0 -0.01940 891.33 161.97)" d="M50 615H81V225Q118 262 165 262Q197 262 223 240Q249 219 249 178Q249 146 230 119Q211 92 179 65L110 6Q91 -10 76 -26Q61 -41 50 -55ZM81 12Q107 40 125 64Q143 87 153 105Q164 124 170 140Q175 156 175 170Q175 198 162 210Q149 223 134 223Q118 223 102 212Q87 200 81 180Z" class="g"/>
<path transform="matrix(0.01940 0 0 -0.01940 897.13 171.66)" d="M50 615H81V225Q118 262 165 262Q197 262 223 240Q249 219 249 178Q249 146 230 119Q211 92 179 65L110 6Q91 -10 76 -26Q61 -41 50 -55ZM81 12Q107 40 125 64Q143 87 153 105Q164 124 170 140Q175 156 175 170Q175 198 162 210Q149 223 134 223Q118 223 102 212Q87 200 81 180Z" class="g"/>
<path transform="matrix(0.01940 0 0 -0.01940 869.43 248.2)" d="M314 801Q300 854 291 906Q282 958 282 1012Q282 1059 288 1100Q295 1142 307 1177Q320 1217 341 1252Q362 1288 386 1311Q409 1334 427 1334Q451 1334 493 1249Q514 1206 524 1156Q534 1106 534 1049Q534 978 515 908Q496 837 460 775Q423 713 372 666L407 498Q422 500 432 501Q442 502 447 502Q508 502 556 468Q604 433 632 377Q661 321 661 254Q661 177 622 116Q582 54 503 25Q508 8 532 -117Q538 -147 541 -164Q544 -182 545 -195Q546 -208 546 -225Q546 -275 522 -314Q497 -354 456 -376Q414 -398 363 -398Q311 -398 271 -378Q231 -359 208 -324Q185 -290 185 -245Q185 -197 212 -165Q238 -133 287 -133Q329 -133 356 -164Q382 -194 382 -236Q382 -272 357 -299Q332 -326 292 -326H282Q308 -365 364 -365Q433 -365 472 -320Q511 -275 511 -205Q511 -188 507 -160Q503 -131 493 -91Q483 -51 478 -25Q472 1 470 12Q436 2 390 2Q304 2 222 52Q142 102 96 184Q50 266 50 361Q50 451 91 530Q132 609 192 675Q253 741 314 801ZM341 826Q364 838 390 870Q416 903 440 945Q464 987 479 1030Q494 1072 494 1106Q494 1142 483 1163Q472 1184 445 1184Q421 1184 398 1162Q376 1140 358 1104Q341 1067 331 1022Q321 977 321 930Q321 898 328 872Q334 846 341 826ZM398 379Q371 373 347 354Q323 334 308 306Q294 279 294 248Q294 223 307 196Q320 170 339 154Q352 142 365 136Q380 129 380 123Q380 120 370 117Q332 126 302 151Q271 176 254 212Q236 247 236 287Q236 330 254 370Q271 410 302 442Q334 474 374 490L345 641Q229 547 174 456Q120 366 120 277Q120 212 154 156Q188 100 247 66Q306 31 380 31Q400 31 420 35Q441 39 464 45ZM495 55Q593 97 593 227Q593 270 571 306Q549 341 512 362Q475 383 429 383Z" class="g"/>
<path transform="matrix(0.01940 0 0 -0.01940 886.23 240.44)" d="M50 615H81V225Q118 262 165 262Q197 262 223 240Q249 219 249 178Q249 146 230 119Q211 92 179 65L110 6Q91 -10 76 -26Q61 -41 50 -55ZM81 12Q107 40 125 64Q143 87 153 105Q164 124 170 140Q175 156 175 170Q175 198 162 210Q149 223 134 223Q118 223 102 212Q87 200 81 180Z" class="g"/>
<path transform="matrix(0.01940 0 0 -0.01940 891.33 233.17)" d="M50 615H81V225Q118 262 165 262Q197 262 223 240Q249 219 249 178Q249 146 230 119Q211 92 179 65L110 6Q91 -10 76 -26Q61 -41 50 -55ZM81 12Q107 40 125 64Q143 87 153 105Q164 124 170 140Q175 156 175 170Q175 198 162 210Q149 223 134 223Q118 223 102 212Q87 200 81 180Z" class="g"/>
<path transform="matrix(0.01940 0 0 -0.01940 897.13 242.87)" d="M50 615H81V225Q118 262 165 262Q197 262 223 240Q249 219 249 178Q249 146 230 119Q211 92 179 65L110 6Q91 -10 76 -26Q61 -41 50 -55ZM81 12Q107 40 125 64Q143 87 153 105Q164 124 170 140Q175 156 175 170Q175 198 162 210Q149 223 134 223Q118 223 102 212Q87 200 81 180Z" class="g"/>
<path transform="matrix(0.01824 0 0 -0.02056 869.09 313.47)" d="M50 123Q216 231 288 301Q336 348 373 408Q410 469 432 536Q453 603 453 669Q453 728 435 774Q417 819 383 845Q349 871 302 871Q284 871 264 867Q245 863 224 855Q181 839 158 814Q135 788 135 765Q135 756 143 752Q151 748 158 748Q168 748 183 752Q190 754 196 755Q203 756 210 756Q248 756 272 734Q296 711 296 674Q296 638 266 612Q236 586 195 586Q146 586 111 617Q76 648 76 697Q76 756 109 802Q142 848 198 874Q255 900 324 900Q400 900 460 867Q520 834 556 776Q591 719 591 646Q591 551 538 464Q511 419 476 379Q442 339 389 298Q336 256 256 208Q176 160 57 101ZM687 809Q710 809 726 793Q742 777 742 754Q742 731 726 716Q710 700 687 700Q664 700 648 716Q632 731 632 754Q632 777 648 793Q664 809 687 809ZM687 589Q710 589 726 573Q742 557 742 534Q742 511 726 496Q710 480 687 480Q664 480 648 496Q632 511 632 534Q632 557 648 573Q664 589 687 589Z" class="g"/>
<path transform="matrix(0.01940 0 0 -0.01940 886.23 310.39)" d="M50 615H81V225Q118 262 165 262Q197 262 223 240Q249 219 249 178Q249 146 230 119Q211 92 179 65L110 6Q91 -10 76 -26Q61 -41 50 -55ZM81 12Q107 40 125 64Q143 87 153 105Q164 124 170 140Q175 156 175 170Q175 198 162 210Q149 223 134 223Q118 223 102 212Q87 200 81 180Z" class="g"/>
<path transform="matrix(0.01940 0 0 -0.01940 891.33 303.11)" d="M50 615H81V225Q118 262 165 262Q197 262 223 240Q249 219 249 178Q249 146 230 119Q211 92 179 65L110 6Q91 -10 76 -26Q61 -41 50 -55ZM81 12Q107 40 125 64Q143 87 153 105Q164 124 170 140Q175 156 175 170Q175 198 162 210Q149 223 134 223Q118 223 102 212Q87 200 81 180Z" class="g"/>
<path transform="matrix(0.01940 0 0 -0.01940 897.13 312.81)" d="M50 615H81V225Q118 262 165 262Q197 262 223 240Q249 219 249 178Q249 146 230 119Q211 92 179 65L110 6Q91 -10 76 -26Q61 -41 50 -55ZM81 12Q107 40 125 64Q143 87 153 105Q164 124 170 140Q175 156 175 170Q175 198 162 210Q149 223 134 223Q118 223 102 212Q87 200 81 180Z" class="g"/>
<path transform="matrix(0.01940 0 0 -0.01940 869.43 385)" d="M314 801Q300 854 291 906Q282 958 282 1012Q282 1059 288 1100Q295 1142 307 1177Q320 1217 341 1252Q362 1288 386 1311Q409 1334 427 1334Q451 1334 493 1249Q514 1206 524 1156Q534 1106 534 1049Q534 978 515 908Q496 837 460 775Q423 713 372 666L407 498Q422 500 432 501Q442 502 447 502Q508 502 556 468Q604 433 632 377Q661 321 661 254Q661 177 622 116Q582 54 503 25Q508 8 532 -117Q538 -147 541 -164Q544 -182 545 -195Q546 -208 546 -225Q546 -275 522 -314Q497 -354 456 -376Q414 -398 363 -398Q311 -398 271 -378Q231 -359 208 -324Q185 -290 185 -245Q185 -197 212 -165Q238 -133 287 -133Q329 -133 356 -164Q382 -194 382 -236Q382 -272 357 -299Q332 -326 292 -326H282Q308 -365 364 -365Q433 -365 472 -320Q511 -275 511 -205Q511 -188 507 -160Q503 -131 493 -91Q483 -51 478 -25Q472 1 470 12Q436 2 390 2Q304 2 222 52Q142 102 96 184Q50 266 50 361Q50 451 91 530Q132 609 192 675Q253 741 314 801ZM341 826Q364 838 390 870Q416 903 440 945Q464 987 479 1030Q494 1072 494 1106Q494 1142 483 1163Q472 1184 445 1184Q421 1184 398 1162Q376 1140 358 1104Q341 1067 331 1022Q321 977 321 930Q321 898 328 872Q334 846 341 826ZM398 379Q371 373 347 354Q323 334 308 306Q294 279 294 248Q294 223 307 196Q320 170 339 154Q352 142 365 136Q380 129 380 123Q380 120 370 117Q332 126 302 151Q271 176 254 212Q236 247 236 287Q236 330 254 370Q271 410 302 442Q334 474 374 490L345 641Q229 547 174 456Q120 366 120 277Q120 212 154 156Q188 100 247 66Q306 31 380 31Q400 31 420 35Q441 39 464 45ZM495 55Q593 97 593 227Q593 270 571 306Q549 341 512 362Q475 383 429 383Z" class="g"/>
<path transform="matrix(0.01940 0 0 -0.01940 886.23 377.24)" d="M50 615H81V225Q118 262 165 262Q197 262 223 240Q249 219 249 178Q249 146 230 119Q211 92 179 65L110 6Q91 -10 76 -26Q61 -41 50 -55ZM81 12Q107 40 125 64Q143 87 153 105Q164 124 170 140Q175 156 175 170Q175 198 162 210Q149 223 134 223Q118 223 102 212Q87 200 81 180Z" class="g"/>
<path transform="matrix(0.01940 0 0 -0.01940 891.33 369.97)" d="M50 615H81V225Q118 262 165 262Q197 262 223 240Q249 219 249 178Q249 146 230 119Q211 92 179 65L110 6Q91 -10 76 -26Q61 -41 50 -55ZM81 12Q107 40 125 64Q143 87 153 105Q164 124 170 140Q175 156 175 170Q175 198 162 210Q149 223 134 223Q118 223 102 212Q87 200 81 180Z" class="g"/>
<path transform="matrix(0.01940 0 0 -0.01940 897.13 379.67)" d="M50 615H81V225Q118 262 165 262Q197 262 223 240Q249 219 249 178Q249 146 230 119Q211 92 179 65L110 6Q91 -10 76 -26Q61 -41 50 -55ZM81 12Q107 40 125 64Q143 87 153 105Q164 124 170 140Q175 156 175 170Q175 198 162 210Q149 223 134 223Q118 223 102 212Q87 200 81 180Z" class="g"/>
<path transform="matrix(0.01824 0 0 -0.02056 869.09 435.57)" d="M50 123Q216 231 288 301Q336 348 373 408Q410 469 432 536Q453 603 453 669Q453 728 435 774Q417 819 383 845Q349 871 302 871Q284 871 264 867Q245 863 224 855Q181 839 158 814Q135 788 135 765Q135 756 143 752Q151 748 158 748Q168 748 183 752Q190 754 196 755Q203 756 210 756Q248 756 272 734Q296 711 296 674Q296 638 266 612Q236 586 195 586Q146 586 111 617Q76 648 76 697Q76 756 109 802Q142 848 198 874Q255 900 324 900Q400 900 460 867Q520 834 556 776Q591 719 591 646Q591 551 538 464Q511 419 476 379Q442 339 389 298Q336 256 256 208Q176 160 57 101ZM687 809Q710 809 726 793Q742 777 742 754Q742 731 726 716Q710 700 687 700Q664 700 648 716Q632 731 632 754Q632 777 648 793Q664 809 687 809ZM687 589Q710 589 726 573Q742 557 742 534Q742 511 726 496Q710 480 687 480Q664 480 648 496Q632 511 632 534Q632 557 648 573Q664 589 687 589Z" class="g"/>
<path transform="matrix(0.01940 0 0 -0.01940 886.23 432.49)" d="M50 615H81V225Q118 262 165 262Q197 262 223 240Q249 219 249 178Q249 146 230 119Q211 92 179 65L110 6Q91 -10 76 -26Q61 -41 50 -55ZM81 12Q107 40 125 64Q143 87 153 105Q164 124 170 140Q175 156 175 170Q175 198 162 210Q149 223 134 223Q118 223 102 212Q87 200 81 180Z" class="g"/>
<path transform="matrix(0.01940 0 0 -0.01940 891.33 425.21)" d="M50 615H81V225Q118 262 165 262Q197 262 223 240Q249 219 249 178Q249 146 230 119Q211 92 179 65L110 6Q91 -10 76 -26Q61 -41 50 -55ZM81 12Q107 40 125 64Q143 87 153 105Q164 124 170 140Q175 156 175 170Q175 198 162 210Q149 223 134 223Q118 223 102 212Q87 200 81 180Z" class="g"/>
<path transform="matrix(0.01940 0 0 -0.01940 897.13 434.92)" d="M50 615H81V225Q118 262 165 262Q197 262 223 240Q249 219 249 178Q249 146 230 119Q211 92 179 65L110 6Q91 -10 76 -26Q61 -41 50 -55ZM81 12Q107 40 125 64Q143 87 153 105Q164 124 170 140Q175 156 175 170Q175 198 162 210Q149 223 134 223Q118 223 102 212Q87 200 81 180Z" class="g"/>
<rect x="927.2" y="298.75" width="6.2" height="2.7"/>
<rect x="927.2" y="370.45" width="6.2" height="2.7"/>
<rect x="927.2" y="420.85" width="6.2" height="2.7"/>
<text x="834.6" y="131.4" font-size="11.2" fill="#111" font-weight="700">2</text>
<text x="864.8" y="148" font-size="8.4" fill="#333" font-style="italic">22</text>
<text x="866" y="543.6" font-size="8.4" fill="#333" font-style="italic">29</text>
<text x="834.8" y="171.2" font-size="10" fill="#222" textLength="19.6" lengthAdjust="spacingAndGlyphs" stroke="#222" stroke-width=".2">Pno.</text>
<text x="834.8" y="274.9" font-size="10" fill="#222" textLength="19.6" lengthAdjust="spacingAndGlyphs" stroke="#222" stroke-width=".2">Pno.</text>
<text x="834.8" y="403.6" font-size="10" fill="#222" textLength="19.6" lengthAdjust="spacingAndGlyphs" stroke="#222" stroke-width=".2">Pno.</text>
<path transform="matrix(0.02121 0 0 -0.01862 913.29 174.65)" d="M159 -1Q111 -1 80 22Q50 44 50 90Q50 141 78 182Q107 222 153 246Q199 269 251 269Q295 269 321 246Q347 222 347 179Q347 130 321 89Q295 48 252 24Q210 -1 159 -1ZM77 66Q77 56 84 48Q92 40 105 40Q140 40 192 69Q227 89 256 114Q284 138 301 162Q318 187 318 204Q318 215 312 222Q307 230 293 230Q274 230 247 218Q220 206 190 187Q161 168 135 146Q109 123 93 102Q77 81 77 66Z" class="g"/>
<path d="M920.3 171.35V155.18" stroke="#111" stroke-width=".7" fill="none"/>
<circle cx="924.3" cy="169.72" r=".95"/>
<path transform="matrix(0.02121 0 0 -0.01862 942.19 172.22)" d="M159 -1Q111 -1 80 22Q50 44 50 90Q50 141 78 182Q107 222 153 246Q199 269 251 269Q295 269 321 246Q347 222 347 179Q347 130 321 89Q295 48 252 24Q210 -1 159 -1Z" class="g"/>
<path d="M949.2 168.92V152.75" stroke="#111" stroke-width=".7" fill="none"/>
<path d="M913.65 253.05H922.95M913.65 257.9H922.95M913.65 262.75H922.95M913.65 267.6H922.95M913.65 272.45H922.95M913.65 277.3H922.95" stroke="#111" stroke-width=".85" fill="none"/>
<path transform="matrix(0.02121 0 0 -0.01862 914.09 279.8)" d="M159 -1Q111 -1 80 22Q50 44 50 90Q50 141 78 182Q107 222 153 246Q199 269 251 269Q295 269 321 246Q347 222 347 179Q347 130 321 89Q295 48 252 24Q210 -1 159 -1ZM77 66Q77 56 84 48Q92 40 105 40Q140 40 192 69Q227 89 256 114Q284 138 301 162Q318 187 318 204Q318 215 312 222Q307 230 293 230Q274 230 247 218Q220 206 190 187Q161 168 135 146Q109 123 93 102Q77 81 77 66Z" class="g"/>
<path d="M921.1 276.5V238.5" stroke="#111" stroke-width=".7" fill="none"/>
<circle cx="924.5" cy="274.88" r=".95"/>
<path d="M942.15 253.05H951.45M942.15 257.9H951.45M942.15 262.75H951.45M942.15 267.6H951.45M942.15 272.45H951.45" stroke="#111" stroke-width=".85" fill="none"/>
<path transform="matrix(0.02121 0 0 -0.01862 942.59 277.37)" d="M159 -1Q111 -1 80 22Q50 44 50 90Q50 141 78 182Q107 222 153 246Q199 269 251 269Q295 269 321 246Q347 222 347 179Q347 130 321 89Q295 48 252 24Q210 -1 159 -1Z" class="g"/>
<path d="M949.6 274.07V238.5" stroke="#111" stroke-width=".7" fill="none"/>
<path d="M946.6 277.2C954.55 281.19 967.05 281.19 975 277.2C967.05 282.89 954.55 282.89 946.6 277.2Z" stroke="#111" stroke-width=".35"/>
<rect x="188" y="538.8" width="772" height="1.2" fill="#232325"/>
<rect x="345.65" y="145" width="2.2" height="222.6" fill="#2475c6" style="mix-blend-mode:multiply"/>
</svg>
<svg id="ui" width="960" height="540" viewBox="0 0 960 540" fill="#e4e4e4">
<rect x="5.9" y="37.8" width="1.7" height="1.7"/><rect x="5.9" y="41.7" width="1.7" height="1.7"/><rect x="5.9" y="45.6" width="1.7" height="1.7"/><rect x="9.9" y="37.8" width="1.7" height="1.7"/><rect x="9.9" y="41.7" width="1.7" height="1.7"/><rect x="9.9" y="45.6" width="1.7" height="1.7"/><g transform="rotate(45 30.5 42)" fill="none" stroke="#e4e4e4" stroke-width="1"><path d="M29.2 33.8h2.7v12.6l-1.35 2.9l-1.35-2.9zM29.2 36.2h2.7"/></g><path d="M53.1 35a2.6 2.6 0 0 1 2.6 2.6q0 2-2 3.4h-1.2q-2-1.4-2-3.4a2.6 2.6 0 0 1 2.6-2.6z"/><path d="M53.1 39v10.2" stroke="#e4e4e4" stroke-width="1.1"/><path transform="matrix(0.01987 0 0 -0.01741 73.61 50.48)" d="M159 -1Q111 -1 80 22Q50 44 50 90Q50 141 78 182Q107 222 153 246Q199 269 251 269Q295 269 321 246Q347 222 347 179Q347 130 321 89Q295 48 252 24Q210 -1 159 -1Z" stroke="#e4e4e4" stroke-width="14"/><path d="M80 47.55V33.7" stroke="#e4e4e4" stroke-width="1"/><path transform="matrix(0.01250 0 0 -0.01196 79.6 49.61)" d="M0 1330H26Q29 1295 41 1268Q53 1242 80 1212Q108 1182 157 1135Q206 1089 231 1048Q256 1008 265 970Q274 932 274 892Q274 865 271 845Q268 825 261 805Q267 783 270 761Q274 739 274 716Q274 694 272 672Q269 650 262 628Q269 609 272 589Q274 569 274 548Q274 512 264 472Q288 441 288 374Q288 328 276 280Q263 231 237 193H221Q266 286 266 355Q266 391 253 424Q240 458 212 489Q156 551 0 634ZM30 1148Q30 1083 86 1030Q108 1010 126 992Q143 975 158 960Q193 926 214 898Q234 871 247 841Q250 859 250 875Q250 924 232 963Q213 1002 182 1034Q151 1066 112 1094Q72 1121 30 1148ZM30 972Q30 933 47 903Q58 884 78 863Q97 842 121 820Q156 789 190 750Q225 712 247 665Q250 683 250 699Q250 762 217 813Q198 842 173 866Q148 890 119 912Q97 929 75 944Q53 958 30 972ZM28 798Q31 750 55 712Q79 675 115 641L191 570Q212 551 226 534Q240 517 247 503Q248 506 248 527Q248 678 28 798Z" stroke="#e4e4e4" stroke-width="18"/><path transform="matrix(0.01987 0 0 -0.01741 96.01 50.48)" d="M159 -1Q111 -1 80 22Q50 44 50 90Q50 141 78 182Q107 222 153 246Q199 269 251 269Q295 269 321 246Q347 222 347 179Q347 130 321 89Q295 48 252 24Q210 -1 159 -1Z" stroke="#e4e4e4" stroke-width="14"/><path d="M102.4 47.55V33.7" stroke="#e4e4e4" stroke-width="1"/><path transform="matrix(0.01250 0 0 -0.01311 102 48.83)" d="M0 1154H26Q29 1117 42 1089Q56 1061 84 1031Q113 1001 160 956Q207 912 232 872Q256 832 265 794Q274 756 274 716Q274 694 272 672Q269 650 262 628Q269 609 272 589Q274 569 274 548Q274 512 264 472Q288 441 288 374Q288 328 276 280Q263 231 237 193H221Q266 286 266 355Q266 372 264 388Q261 404 255 418Q235 468 194 506Q153 545 103 574Q66 596 44 606Q23 615 0 624ZM30 972Q30 935 47 903Q59 881 82 857Q106 833 135 806Q167 778 197 743Q227 708 247 665Q250 683 250 699Q250 762 217 813Q199 841 176 864Q153 886 126 906Q104 923 80 940Q55 957 30 972ZM28 798Q31 750 55 712Q79 675 115 641L191 570Q212 551 226 534Q240 517 247 503Q248 506 248 527Q248 678 28 798Z" stroke="#e4e4e4" stroke-width="18"/><path transform="matrix(0.01987 0 0 -0.01741 117.81 50.48)" d="M159 -1Q111 -1 80 22Q50 44 50 90Q50 141 78 182Q107 222 153 246Q199 269 251 269Q295 269 321 246Q347 222 347 179Q347 130 321 89Q295 48 252 24Q210 -1 159 -1Z" stroke="#e4e4e4" stroke-width="14"/><path d="M124.2 47.55V33.6" stroke="#e4e4e4" stroke-width="1"/><path transform="matrix(0.01608 0 0 -0.01394 123.8 47.66)" d="M0 1009H26Q30 974 38 950Q47 927 60 907Q77 882 98 866Q120 849 146 823Q176 794 206 757Q235 720 254 674Q274 629 274 573Q274 551 271 528Q268 504 260 478Q286 440 286 368Q286 320 274 272Q261 225 235 191H219Q266 283 266 351Q266 416 220 471Q190 508 150 537Q111 566 72 586Q32 605 0 613ZM32 823Q32 798 38 774Q45 749 56 727Q64 713 88 683Q111 653 145 619Q181 585 212 552Q242 519 247 505Q251 520 251 547Q251 623 202 690Q153 757 32 823Z" stroke="#e4e4e4" stroke-width="18"/><path transform="matrix(0.01987 0 0 -0.01741 140.31 50.48)" d="M159 -1Q111 -1 80 22Q50 44 50 90Q50 141 78 182Q107 222 153 246Q199 269 251 269Q295 269 321 246Q347 222 347 179Q347 130 321 89Q295 48 252 24Q210 -1 159 -1Z" stroke="#e4e4e4" stroke-width="14"/><path d="M146.7 47.55V33.4" stroke="#e4e4e4" stroke-width="1"/><path transform="matrix(0.01679 0 0 -0.01413 146.3 47.66)" d="M0 1009H26Q33 968 42 936Q50 905 66 876Q83 846 112 812L152 765Q178 736 202 704Q274 611 274 511Q274 407 186 259H170Q199 318 221 378Q243 437 243 491Q243 518 235 546Q227 575 212 605Q181 666 125 704Q69 743 0 743Z" stroke="#e4e4e4" stroke-width="18"/><path transform="matrix(0.01987 0 0 -0.01741 164.61 50.48)" d="M159 -1Q111 -1 80 22Q50 44 50 90Q50 141 78 182Q107 222 153 246Q199 269 251 269Q295 269 321 246Q347 222 347 179Q347 130 321 89Q295 48 252 24Q210 -1 159 -1Z" stroke="#e4e4e4" stroke-width="14"/><path d="M171 47.55V34" stroke="#e4e4e4" stroke-width="1"/><path transform="matrix(0.01987 0 0 -0.01741 187.01 50.48)" d="M159 -1Q111 -1 80 22Q50 44 50 90Q50 141 78 182Q107 222 153 246Q199 269 251 269Q295 269 321 246Q347 222 347 179Q347 130 321 89Q295 48 252 24Q210 -1 159 -1ZM77 66Q77 56 84 48Q92 40 105 40Q140 40 192 69Q227 89 256 114Q284 138 301 162Q318 187 318 204Q318 215 312 222Q307 230 293 230Q274 230 247 218Q220 206 190 187Q161 168 135 146Q109 123 93 102Q77 81 77 66Z" stroke="#e4e4e4" stroke-width="14"/><path d="M193.4 47.55V34" stroke="#e4e4e4" stroke-width="1"/><path transform="matrix(0.01480 0 0 -0.01780 210.26 50.54)" d="M50 135Q50 172 77 200Q104 228 150 244Q197 260 253 260Q310 260 358 244Q406 229 435 201Q464 173 464 135Q464 96 436 68Q408 39 362 24Q315 8 259 8Q203 8 156 23Q108 38 79 66Q50 95 50 135ZM280 28Q314 28 326 53Q339 78 339 112Q339 147 324 176Q310 205 286 222Q262 240 232 240Q198 240 186 215Q175 190 175 156Q175 122 189 93Q203 64 226 46Q250 28 280 28Z" stroke="#e4e4e4" stroke-width="14"/><path transform="matrix(0.01987 0 0 -0.01741 233.41 50.48)" d="M159 -1Q111 -1 80 22Q50 44 50 90Q50 141 78 182Q107 222 153 246Q199 269 251 269Q295 269 321 246Q347 222 347 179Q347 130 321 89Q295 48 252 24Q210 -1 159 -1Z" stroke="#e4e4e4" stroke-width="14"/><path d="M239.8 47.55V34" stroke="#e4e4e4" stroke-width="1"/><circle cx="243.3" cy="48.7" r="1.05"/><path transform="matrix(0.01650 0 0 -0.01600 258.76 50.17)" d="M147 878 307 683Q257 624 230 581Q203 538 203 494Q203 457 227 416Q251 376 303 314L287 292Q243 320 205 320Q177 320 163 302Q149 283 149 257Q149 225 162 196Q176 168 199 142L186 123Q117 173 84 214Q51 255 51 303Q51 346 78 366Q105 386 143 386Q173 386 221 363V365L67 570Q168 659 168 736Q168 797 104 878Z" stroke="#e4e4e4" stroke-width="14"/><path transform="matrix(0.02150 0 0 -0.01900 282.12 47.75)" d="M218 107Q210 95 192 78Q175 61 147 39Q92 -4 50 -55V615H79V225Q125 262 163 262Q195 262 218 242V615H249V225Q286 262 333 262Q365 262 391 240Q417 219 417 178Q417 146 398 119Q379 92 347 65L278 6Q239 -28 218 -55ZM249 12Q289 54 316 96Q343 137 343 170Q343 198 330 210Q317 223 302 223Q286 223 270 212Q255 200 249 180ZM79 12 120 59Q149 92 161 117Q173 142 173 170Q173 221 132 221Q116 221 100 210Q85 198 79 180Z" stroke="#e4e4e4" stroke-width="14"/><path transform="matrix(0.02250 0 0 -0.01900 306.68 47.75)" d="M50 615H81V225Q118 262 165 262Q197 262 223 240Q249 219 249 178Q249 146 230 119Q211 92 179 65L110 6Q91 -10 76 -26Q61 -41 50 -55ZM81 12Q107 40 125 64Q143 87 153 105Q164 124 170 140Q175 156 175 170Q175 198 162 210Q149 223 134 223Q118 223 102 212Q87 200 81 180Z" stroke="#e4e4e4" stroke-width="14"/><path transform="matrix(0.02700 0 0 -0.01950 329.05 44.89)" d="M226 316V-221H195V-9L50 -46V486H83V279ZM197 84V212L81 183V56Z" stroke="#e4e4e4" stroke-width="14"/><path transform="matrix(0.02350 0 0 -0.01850 351.02 44.63)" d="M97 46V189L50 177V277L97 290V486H128V298L195 314V509H226V322L275 333V234L226 220V77L275 89V-14L226 -26V-214H195V-34L128 -52V-247H97V-59L50 -71V32ZM195 70V214L128 197V54Z" stroke="#e4e4e4" stroke-width="14"/><path transform="matrix(0.02250 0 0 -0.02350 373.48 45.5)" d="M224 0V45Q224 64 212 75Q199 86 181 86Q162 86 149 75Q136 64 136 47V0H50V86H105Q119 86 128 100Q136 114 136 131Q136 147 126 162Q117 176 111 176H50V262H136V209Q136 195 149 186Q162 176 181 176Q196 176 210 185Q224 194 224 207V262H310V176H259Q246 176 235 160Q224 145 224 131Q224 114 234 100Q243 86 259 86H310V0Z" stroke="#e4e4e4" stroke-width="14"/><path transform="matrix(0.01684 0 0 -0.01444 396.16 46.99)" d="M159 -1Q111 -1 80 22Q50 44 50 90Q50 141 78 182Q107 222 153 246Q199 269 251 269Q295 269 321 246Q347 222 347 179Q347 130 321 89Q295 48 252 24Q210 -1 159 -1Z" stroke="#e4e4e4" stroke-width="14"/><path d="M401.5 44.45V36.2" stroke="#e4e4e4" stroke-width="1"/><path transform="matrix(0.01684 0 0 -0.01444 404.56 46.99)" d="M159 -1Q111 -1 80 22Q50 44 50 90Q50 141 78 182Q107 222 153 246Q199 269 251 269Q295 269 321 246Q347 222 347 179Q347 130 321 89Q295 48 252 24Q210 -1 159 -1Z" stroke="#e4e4e4" stroke-width="14"/><path d="M409.9 44.45V36.2" stroke="#e4e4e4" stroke-width="1"/><path d="M399.3 47.6q4.6 3.4 9.2 0" fill="none" stroke="#e4e4e4" stroke-width=".9"/><ellipse cx="420.8" cy="38.9" rx="2.3" ry="1.7" transform="rotate(-25 420.8 38.9)"/><path d="M418.9 39.2V49.6" stroke="#e4e4e4" stroke-width="1"/><ellipse cx="426.1" cy="38.9" rx="2.3" ry="1.7" transform="rotate(-25 426.1 38.9)"/><path d="M424.2 39.2V49.6" stroke="#e4e4e4" stroke-width="1"/><ellipse cx="431.4" cy="38.9" rx="2.3" ry="1.7" transform="rotate(-25 431.4 38.9)"/><path d="M429.5 39.2V49.6" stroke="#e4e4e4" stroke-width="1"/><path d="M418.6 36.6q7.4-5.4 14.4-.6" fill="none" stroke="#e4e4e4" stroke-width=".8"/><path d="M448.2 45.4l3-6.2l3 6.2" fill="none" stroke="#e4e4e4" stroke-width="1.5"/><path d="M469.4 39.4l7.8 2.7l-7.8 2.7" fill="none" stroke="#e4e4e4" stroke-width="1.3"/><rect x="492.2" y="41" width="7.6" height="1.5"/><rect x="517.6" y="40.7" width="2.3" height="2.3" rx="1"/><ellipse cx="538.6" cy="48" rx="2.4" ry="1.8" transform="rotate(-25 538.6 48)"/><path d="M540.7 47.6V37.6" stroke="#e4e4e4" stroke-width=".9"/><ellipse cx="544.5" cy="48" rx="2.4" ry="1.8" transform="rotate(-25 544.5 48)"/><path d="M546.6 47.6V37.6" stroke="#e4e4e4" stroke-width=".9"/><ellipse cx="550.4" cy="48" rx="2.4" ry="1.8" transform="rotate(-25 550.4 48)"/><path d="M552.5 47.6V37.6" stroke="#e4e4e4" stroke-width=".9"/><path d="M540.7 37.6h11.8" stroke="#e4e4e4" stroke-width="1.2"/><text x="544.8" y="36.2" font-size="4.5" font-weight="700" fill="#e4e4e4">3</text><ellipse cx="564.6" cy="37.6" rx="2.3" ry="1.7" transform="rotate(-25 564.6 37.6)"/><path d="M562.6 38V47.6" stroke="#e4e4e4" stroke-width="1"/><path d="M568.4 38.6q3.6 3.6 0 8" fill="none" stroke="#e4e4e4" stroke-width=".9"/><path d="M566.8 45.8l1.4 1.6l1.9-.9" fill="none" stroke="#e4e4e4" stroke-width=".9"/><rect x="582.8" y="32" width="19.8" height="20" rx="1.5" fill="#2a7fd4"/><path transform="matrix(0.01751 0 0 -0.01481 585.52 47.99)" d="M159 -1Q111 -1 80 22Q50 44 50 90Q50 141 78 182Q107 222 153 246Q199 269 251 269Q295 269 321 246Q347 222 347 179Q347 130 321 89Q295 48 252 24Q210 -1 159 -1Z" fill="#fff" stroke="#fff" stroke-width="14"/><path d="M591.1 45.4V36.4" stroke="#fff" stroke-width="1"/><text x="592.4" y="46" font-size="8.8" font-weight="700" fill="#fff">1</text><ellipse cx="612.6" cy="38" rx="2.3" ry="1.7" transform="rotate(-25 612.6 38)"/><path d="M610.7 38.4V47.8" stroke="#e4e4e4" stroke-width="1"/><text x="615.2" y="46" font-size="8.8" font-weight="700" fill="#e4e4e4">2</text><path d="M636 42h9.6M640.8 37.2v9.6" stroke="#e4e4e4" stroke-width="1"/><path d="M664.57 47.74L661.53 47.74L661.41 46.14L660.51 45.62L659.05 46.31L657.53 43.68L658.86 42.77L658.86 41.73L657.53 40.82L659.05 38.19L660.51 38.88L661.41 38.36L661.53 36.76L664.57 36.76L664.69 38.36L665.59 38.88L667.05 38.19L668.57 40.82L667.24 41.73L667.24 42.77L668.57 43.68L667.05 46.31L665.59 45.62L664.69 46.14Z" fill="none" stroke="#e4e4e4" stroke-width="1.0" stroke-linejoin="round"/><circle cx="663.05" cy="42.25" r="1.71" fill="none" stroke="#e4e4e4" stroke-width="1.0"/><rect x="64.5" y="30.5" width="1" height="23.5" fill="#222224"/><rect x="225.8" y="30.5" width="1" height="23.5" fill="#222224"/><rect x="273.8" y="30.5" width="1" height="23.5" fill="#222224"/><rect x="390.5" y="30.5" width="1" height="23.5" fill="#222224"/><rect x="438.1" y="30.5" width="1" height="23.5" fill="#222224"/><rect x="530.5" y="30.5" width="1" height="23.5" fill="#222224"/><rect x="579.5" y="30.5" width="1" height="23.5" fill="#222224"/><rect x="626.8" y="30.5" width="1" height="23.5" fill="#222224"/>
<rect x="434.4" y="11.4" width="8.6" height="11.2" rx="1.3" fill="none" stroke="#e4e4e4" stroke-width="1"/><path d="M436.6 14.6h4.2M436.6 16.6h4.2M436.6 18.6h4.2M436.6 20.4h4.2" stroke="#e4e4e4" stroke-width=".8"/><path d="M486 11.8V22.6" stroke="#e4e4e4" stroke-width="1"/><circle cx="486" cy="18.4" r="1.5" fill="#2d2d30" stroke="#e4e4e4" stroke-width=".9"/><path d="M490.2 11.8V22.6" stroke="#e4e4e4" stroke-width="1"/><circle cx="490.2" cy="15.2" r="1.5" fill="#2d2d30" stroke="#e4e4e4" stroke-width=".9"/><path d="M494.4 11.8V22.6" stroke="#e4e4e4" stroke-width="1"/><circle cx="494.4" cy="17.6" r="1.5" fill="#2d2d30" stroke="#e4e4e4" stroke-width=".9"/><rect x="663.2" y="13.2" width="1.7" height="1.7"/><rect x="663.2" y="17.1" width="1.7" height="1.7"/><rect x="663.2" y="21" width="1.7" height="1.7"/><rect x="667.2" y="13.2" width="1.7" height="1.7"/><rect x="667.2" y="17.1" width="1.7" height="1.7"/><rect x="667.2" y="21" width="1.7" height="1.7"/><path d="M686.4 12.9L679.6 17.2L686.4 21.5Z" fill="none" stroke="#e4e4e4" stroke-width="1" stroke-linejoin="round"/><path d="M689 12.6V21.8" stroke="#e4e4e4" stroke-width="1.1"/><rect x="696" y="8" width="19" height="18.4" rx="1.5" fill="#434346"/><rect x="701.4" y="13.2" width="3" height="8.4" rx=".8" fill="none" stroke="#e4e4e4" stroke-width=".9"/><rect x="706.9" y="13.2" width="3" height="8.4" rx=".8" fill="none" stroke="#e4e4e4" stroke-width=".9"/><path d="M722.6 19V14.2h7.4M731 15.6V20.4h-7.4" fill="none" stroke="#e4e4e4" stroke-width="1.1"/><path d="M728.6 12l2.2 2.2l-2.2 2.2M725 18.2l-2.2 2.2l2.2 2.2" fill="none" stroke="#e4e4e4" stroke-width="1"/><path d="M746.6 13h4.2l2.4 8.6h-9zM747.2 19.6l5.6-7.2" fill="none" stroke="#e4e4e4" stroke-width="1" stroke-linejoin="round"/><path d="M770.82 22.69L767.78 22.69L767.66 21.09L766.76 20.57L765.3 21.26L763.78 18.63L765.11 17.72L765.11 16.68L763.78 15.77L765.3 13.14L766.76 13.83L767.66 13.31L767.78 11.71L770.82 11.71L770.94 13.31L771.84 13.83L773.3 13.14L774.82 15.77L773.49 16.68L773.49 17.72L774.82 18.63L773.3 21.26L771.84 20.57L770.94 21.09Z" fill="none" stroke="#e4e4e4" stroke-width="1.0" stroke-linejoin="round"/><circle cx="769.3" cy="17.2" r="1.71" fill="none" stroke="#e4e4e4" stroke-width="1.0"/><rect x="781.7" y="8.4" width="1" height="16" fill="#222224"/><rect x="913.6" y="8.4" width="1" height="16" fill="#222224"/><ellipse cx="877.3" cy="20.7" rx="1.9" ry="1.4" transform="rotate(-25 877.3 20.7)"/><path d="M878.9 20.4V12.4" stroke="#e4e4e4" stroke-width=".9"/><path d="M925 16.6a4.6 4.6 0 1 1 3.4 5" fill="none" stroke="#e4e4e4" stroke-width="1.1"/><path d="M923.2 14.2l1.4 3.2l3.2-1.2" fill="none" stroke="#e4e4e4" stroke-width="1" /><g opacity=".13"><path d="M950 16.6a4.6 4.6 0 1 0-3.4 5" fill="none" stroke="#e4e4e4" stroke-width="1.1"/><path d="M951.8 14.2l-1.4 3.2l-3.2-1.2" fill="none" stroke="#e4e4e4" stroke-width="1"/></g><path d="M707.2 20.2V28.4L709.2 26.6L710.6 29.6L711.8 29L710.5 26.2H713Z" fill="#fff" stroke="#222" stroke-width=".6" stroke-linejoin="round"/>
<path d="M11.4 146.8q5.2-5.4 10.4 0q-5.2 5.4-10.4 0z" fill="none" stroke="#e4e4e4" stroke-width=".9"/><circle cx="16.6" cy="146.8" r="1.6" fill="none" stroke="#e4e4e4" stroke-width=".9"/><path d="M35.4 144.8l2.8 2l-2.8 2z" fill="#fff"/><rect x="161.6" y="137.8" width="18.4" height="18" rx="1.5" fill="#4c5e74"/><path d="M172.21 151.91L169.39 151.91L169.27 150.41L168.44 149.93L167.08 150.58L165.67 148.13L166.91 147.28L166.91 146.32L165.67 145.47L167.08 143.02L168.44 143.67L169.27 143.19L169.39 141.69L172.21 141.69L172.33 143.19L173.16 143.67L174.52 143.02L175.93 145.47L174.69 146.32L174.69 147.28L175.93 148.13L174.52 150.58L173.16 149.93L172.33 150.41Z" fill="none" stroke="#e4e4e4" stroke-width="0.9" stroke-linejoin="round"/><circle cx="170.8" cy="146.8" r="1.59" fill="none" stroke="#e4e4e4" stroke-width="0.9"/><path d="M11.4 170.5q5.2-5.4 10.4 0q-5.2 5.4-10.4 0z" fill="none" stroke="#e4e4e4" stroke-width=".9"/><circle cx="16.6" cy="170.5" r="1.6" fill="none" stroke="#e4e4e4" stroke-width=".9"/><path d="M35.4 168.5l2.8 2l-2.8 2z" fill="#fff"/><rect x="161.6" y="161.5" width="18.4" height="18" rx="1.5" fill="#4c5e74"/><path d="M172.21 175.61L169.39 175.61L169.27 174.11L168.44 173.63L167.08 174.28L165.67 171.83L166.91 170.98L166.91 170.02L165.67 169.17L167.08 166.72L168.44 167.37L169.27 166.89L169.39 165.39L172.21 165.39L172.33 166.89L173.16 167.37L174.52 166.72L175.93 169.17L174.69 170.02L174.69 170.98L175.93 171.83L174.52 174.28L173.16 173.63L172.33 174.11Z" fill="none" stroke="#e4e4e4" stroke-width="0.9" stroke-linejoin="round"/><circle cx="170.8" cy="170.5" r="1.59" fill="none" stroke="#e4e4e4" stroke-width="0.9"/><path d="M11.4 194.2q5.2-5.4 10.4 0q-5.2 5.4-10.4 0z" fill="none" stroke="#e4e4e4" stroke-width=".9"/><circle cx="16.6" cy="194.2" r="1.6" fill="none" stroke="#e4e4e4" stroke-width=".9"/><path d="M35.4 192.2l2.8 2l-2.8 2z" fill="#fff"/><rect x="161.6" y="185.2" width="18.4" height="18" rx="1.5" fill="#4c5e74"/><path d="M172.21 199.31L169.39 199.31L169.27 197.81L168.44 197.33L167.08 197.98L165.67 195.53L166.91 194.68L166.91 193.72L165.67 192.87L167.08 190.42L168.44 191.07L169.27 190.59L169.39 189.09L172.21 189.09L172.33 190.59L173.16 191.07L174.52 190.42L175.93 192.87L174.69 193.72L174.69 194.68L175.93 195.53L174.52 197.98L173.16 197.33L172.33 197.81Z" fill="none" stroke="#e4e4e4" stroke-width="0.9" stroke-linejoin="round"/><circle cx="170.8" cy="194.2" r="1.59" fill="none" stroke="#e4e4e4" stroke-width="0.9"/><rect x="161.6" y="113.2" width="18.4" height="18.6" rx="1.5" fill="#48484b"/><path d="M172.21 127.61L169.39 127.61L169.27 126.11L168.44 125.63L167.08 126.28L165.67 123.83L166.91 122.98L166.91 122.02L165.67 121.17L167.08 118.72L168.44 119.37L169.27 118.89L169.39 117.39L172.21 117.39L172.33 118.89L173.16 119.37L174.52 118.72L175.93 121.17L174.69 122.02L174.69 122.98L175.93 123.83L174.52 126.28L173.16 125.63L172.33 126.11Z" fill="none" stroke="#e4e4e4" stroke-width="0.9" stroke-linejoin="round"/><circle cx="170.8" cy="122.5" r="1.59" fill="none" stroke="#e4e4e4" stroke-width="0.9"/><rect x="12.6" y="122" width="7.4" height="1" /><rect x="7.5" y="84.8" width="105" height="18.5" rx="1.5" fill="#48484b"/><rect x="116.8" y="84.8" width="18.2" height="18.5" rx="1.5" fill="#39393c"/><rect x="139.2" y="84.8" width="18.2" height="18.5" rx="1.5" fill="#39393c"/><path d="M125.9 98.4V90M123.2 92.6l2.7-2.7l2.7 2.7" fill="none" stroke="#404043" stroke-width=".9"/><path d="M148.3 90V98.4M145.6 95.8l2.7 2.7l2.7-2.7" fill="none" stroke="#404043" stroke-width=".9"/><rect x="161.6" y="84.8" width="18.4" height="18.5" rx="1.5" fill="#48484b"/><path d="M167.4 91.4h6.8v6.4q0 1-1 1h-4.8q-1 0-1-1zM166.4 91.2h8.8M169.2 91v-1.3h3.2V91M169.8 93.4v3.6M171.8 93.4v3.6" fill="none" stroke="#e4e4e4" stroke-width=".9"/><path d="M225.4 60.6l5.6 5.6M231 60.6l-5.6 5.6" stroke="#e4e4e4" stroke-width=".9"/><rect x="40.6" y="65.6" width="1.3" height="1.3"/><rect x="44.1" y="65.6" width="1.3" height="1.3"/><rect x="47.6" y="65.6" width="1.3" height="1.3"/>
</svg>
<div class="t" style="left:7.6px;top:11.9px;font-size:8.3px;transform:scaleX(.8)">ホーム</div>
<div class="t" style="left:42.4px;top:11.9px;font-size:8.3px;font-weight:700;transform:scaleX(.8);color:#fff">スコア</div>
<div class="t" style="left:78px;top:11.9px;font-size:8.3px;transform:scaleX(.95)">公開</div>
<div class="t" style="left:450px;top:11.9px;font-size:8.4px;transform:scaleX(.72)">パート</div>
<div class="t" style="left:501px;top:11.9px;font-size:8.4px;transform:scaleX(.75)">ミキサー</div>
<div class="t" style="left:790.6px;top:13.2px;font-size:9.4px;color:#e0e0e0;transform:scaleX(.9)">0:00:00:8</div>
<div class="t" style="left:846.6px;top:13.2px;font-size:9.4px;color:#e0e0e0;transform:scaleX(.78)">1 . 2</div>
<div class="t" style="left:883.6px;top:13.2px;font-size:9.4px;color:#e0e0e0;transform:scaleX(.9)">= 120</div>
<div class="t" style="left:6.2px;top:60.9px;font-size:8.3px;font-weight:700;transform:scaleX(.69);color:#fff">レイアウト</div>
<div class="t" style="left:61.6px;top:60.9px;font-size:8.3px;transform:scaleX(.68)">プロパティ</div>
<div class="t" style="left:195.8px;top:58.4px;font-size:8.6px;transform:scaleX(.86)">*org.31</div>
<div class="t" style="left:52.2px;top:90.2px;font-size:8px;color:#b9b9b9">追加</div>
<div class="t" style="left:29.8px;top:117.6px;font-size:8.2px;transform:scaleX(.72)">テンポ</div>
<div class="t" style="left:47.6px;top:141.8px;font-size:8.4px;transform:scaleX(.7);color:#fff">ピアノ1</div>
<div class="t" style="left:47.6px;top:165.5px;font-size:8.4px;transform:scaleX(.7);color:#fff">ピアノ2</div>
<div class="t" style="left:47.6px;top:189.2px;font-size:8.4px;transform:scaleX(.7);color:#fff">ピアノ3</div>
</body></html>
